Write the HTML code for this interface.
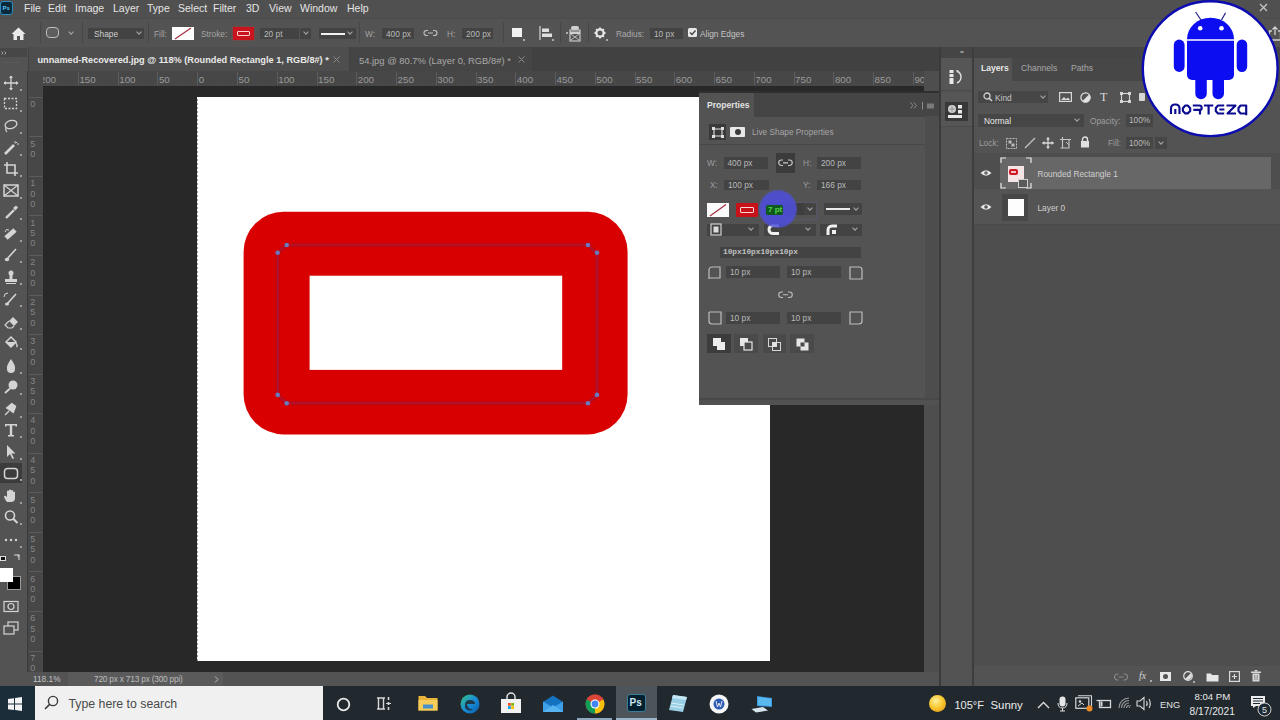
<!DOCTYPE html>
<html><head><meta charset="utf-8">
<style>
*{margin:0;padding:0;box-sizing:border-box}
html,body{width:1280px;height:720px;overflow:hidden;background:#535353;font-family:"Liberation Sans",sans-serif;color:#ddd}
.a{position:absolute}
.t{position:absolute;white-space:nowrap;line-height:1}
svg{position:absolute;overflow:visible}
#menu{left:0;top:0;width:1280px;height:18px;background:#505050}
#menu .t{top:2.7px;font-size:10.5px;color:#e4e4e4}
#opts{left:0;top:18px;width:1280px;height:29px;background:#535353;border-top:1px solid #4c4c4c}
#opts .t{font-size:8.3px;color:#a4a4a4;top:10.5px}
.fld{position:absolute;background:#434343;height:11px;top:10px}
.fld span{position:absolute;left:4px;top:1.5px;font-size:8.3px;color:#bababa;white-space:nowrap;line-height:1}
.sep{position:absolute;top:4px;width:1px;height:21px;background:#474747}
.chev{position:absolute;width:4px;height:4px;border-right:1px solid #aaa;border-bottom:1px solid #aaa;transform:rotate(45deg)}
#opts > :not(.t){margin-top:-1px}
#tools{left:0;top:47px;width:27px;height:625px;background:#535353}
#tabs{left:28px;top:47px;width:911px;height:24px;background:#414141}
.rl{font-size:9.8px;color:#9a9a9a}
.rv{font-size:9px;color:#858585}
#rulerh{left:28px;top:71px;width:896px;height:15px;background:#474747}
#rulerv{left:28px;top:86px;width:15px;height:586px;background:#474747}
#canvas{left:43px;top:86px;width:881px;height:586px;background:#282828}
#doc{left:197px;top:97px;width:573px;height:564px;background:#fff}
#vscroll{left:924px;top:71px;width:15px;height:601px;background:#4e4e4e}
#status{left:27px;top:672px;width:912px;height:14px;background:#535353}
#dock{left:941px;top:47px;width:32px;height:625px;background:#535353}
#layers{left:974px;top:47px;width:306px;height:625px;background:#535353}
#taskbar{left:0;top:686px;width:1280px;height:34px;background:#1f2a32}
</style></head><body>
<!-- MENU -->
<div id="menu" class="a">
  <div class="a" style="left:0px;top:1px;width:13px;height:14px;background:#0a2a3c;border:1px solid #2f8fbf;border-radius:3px"></div>
  <span class="t" style="left:2.5px;top:4.5px;font-size:6px;font-weight:bold;color:#5fc0f0">Ps</span>
  <span class="t" style="left:24px">File</span>
  <span class="t" style="left:48px">Edit</span>
  <span class="t" style="left:75px">Image</span>
  <span class="t" style="left:113px">Layer</span>
  <span class="t" style="left:147px">Type</span>
  <span class="t" style="left:178px">Select</span>
  <span class="t" style="left:213px">Filter</span>
  <span class="t" style="left:246px">3D</span>
  <span class="t" style="left:269px">View</span>
  <span class="t" style="left:300px">Window</span>
  <span class="t" style="left:347px">Help</span>
  <svg style="left:1259px;top:2.5px" width="9" height="9"><path d="M1 1L8 8M8 1L1 8" stroke="#c8c8c8" stroke-width="1.2"/></svg>
</div>
<!-- OPTIONS BAR -->
<div id="opts" class="a">
  <svg style="left:11px;top:9px" width="15" height="14"><path d="M7.5 0.5L0.5 7H2.5V13H6V9H9V13H12.5V7H14.5Z" fill="#eaeaea"/></svg>
  <div class="sep" style="left:40px"></div>
  <div class="a" style="left:46px;top:9px;width:13px;height:11px;border:1.5px solid #bdbdbd;border-radius:4px;background:#5e5e5e"></div>
  <div class="chev" style="left:69px;top:12px"></div>
  <div class="sep" style="left:82px"></div>
  <div class="fld" style="left:88px;width:56px"><span style="left:6px;color:#cfcfcf">Shape</span></div>
  <div class="chev" style="left:137px;top:12px"></div>
  <div class="sep" style="left:148px"></div>
  <span class="t" style="left:154px">Fill:</span>
  <div class="a" style="left:172px;top:8.5px;width:22px;height:13px;background:#fdfdfd"><svg style="left:0;top:0" width="22" height="13"><path d="M3 12L19 1" stroke="#a0303a" stroke-width="1.2"/></svg></div>
  <span class="t" style="left:201px">Stroke:</span>
  <div class="a" style="left:233px;top:8.5px;width:21px;height:13px;background:#c8141c;box-shadow:0 0 1px #e03030"><div class="a" style="left:4px;top:4px;width:13px;height:5px;border:1.2px solid #ffd0d0;border-radius:1px"></div></div>
  <div class="fld" style="left:260px;width:39px"><span>20 pt</span></div>
  <div class="fld" style="left:300px;width:11px"></div>
  <div class="chev" style="left:303.5px;top:12px"></div>
  <div class="fld" style="left:319px;width:37px"><div class="a" style="left:2px;top:4.5px;width:24px;height:2px;background:#f0f0f0"></div></div>
  <div class="chev" style="left:348px;top:12px"></div>
  <div class="sep" style="left:359px"></div>
  <span class="t" style="left:365px">W:</span>
  <div class="fld" style="left:382px;width:32px"><span>400 px</span></div>
  <svg style="left:423px;top:11px" width="15" height="8"><path d="M5 1.5H3.5A2.5 2.5 0 0 0 3.5 6.5H5M10 1.5H11.5A2.5 2.5 0 0 1 11.5 6.5H10M5 4H10" stroke="#c0c0c0" stroke-width="1.2" fill="none"/></svg>
  <span class="t" style="left:447px">H:</span>
  <div class="fld" style="left:462px;width:31px"><span>200 px</span></div>
  <div class="sep" style="left:503px"></div>
  <div class="a" style="left:512px;top:10px;width:10px;height:9px;background:#f2f2f2"></div>
  <div class="a" style="left:523px;top:21px;width:2px;height:2px;background:#aaa"></div>
  <svg style="left:539px;top:8px" width="15" height="15"><path d="M1 0V14" stroke="#ccc" stroke-width="1.3"/><rect x="3" y="2.5" width="7" height="3.5" fill="#e0e0e0"/><rect x="3" y="7.5" width="10" height="3.5" fill="#e0e0e0"/><rect x="13" y="13" width="2" height="2" fill="#aaa"/></svg>
  <div class="sep" style="left:560px"></div>
  <svg style="left:565px;top:7px" width="16" height="17"><circle cx="2" cy="8" r="1" fill="#ccc"/><rect x="6" y="1" width="8" height="4" rx="2" fill="#d0d0d0"/><rect x="5" y="5" width="10" height="11" fill="none" stroke="#c8c8c8" stroke-width="1.2"/><path d="M6 9L14 15M14 9L6 15" stroke="#bbb" stroke-width="1"/><rect x="5" y="6.5" width="10" height="2.5" fill="#d0d0d0"/></svg>
  <div class="sep" style="left:588px"></div>
  <svg style="left:594px;top:9px" width="14" height="14"><circle cx="6" cy="6" r="3.6" fill="none" stroke="#e6e6e6" stroke-width="2.2"/><path d="M6 0.5V2.5M6 9.5V11.5M0.5 6H2.5M9.5 6H11.5M2.1 2.1L3.5 3.5M8.5 8.5L9.9 9.9M2.1 9.9L3.5 8.5M8.5 3.5L9.9 2.1" stroke="#e6e6e6" stroke-width="1.8"/><rect x="12" y="12" width="2" height="2" fill="#aaa"/></svg>
  <span class="t" style="left:616px;color:#a9a9a9">Radius:</span>
  <div class="fld" style="left:650px;width:33px"><span>10 px</span></div>
  <div class="a" style="left:688px;top:10px;width:9px;height:9px;background:#e8e8e8;border-radius:1.5px"><svg style="left:0;top:0" width="9" height="9"><path d="M2 4.5L4 6.5L7.5 2.5" stroke="#444" stroke-width="1.4" fill="none"/></svg></div>
  <span class="t" style="left:700px;color:#c4c4c4">Align Edges</span>
  <svg style="left:1268px;top:8px" width="14" height="15"><path d="M4 5H1.5V14H12.5V5H10M7 1V9M4.5 3.5L7 1L9.5 3.5" stroke="#d0d0d0" stroke-width="1.3" fill="none"/></svg>
</div>
<!-- TOOLBAR -->
<div id="tools" class="a">
  <div class="a" style="left:0;top:1px;width:27px;height:9px;background:#474747"></div>
  <svg style="left:0.5px;top:4px" width="6" height="4"><path d="M0.5 0.5L2 2L0.5 3.5M3.5 0.5L5 2L3.5 3.5" stroke="#b0b0b0" stroke-width="0.9" fill="none"/></svg>
  <div class="a" style="left:3px;top:15px;width:17px;height:1px;background:#5a5a5a"></div>
  <div class="a" style="left:0px;top:415.5px;width:22px;height:20px;background:#3c3c3c"></div>
<svg style="left:3px;top:27.7px" width="16" height="16"><path d="M8 1V15M1 8H15" stroke="#d4d4d4" stroke-width="1.3"/><path d="M8 0.5L6 3H10ZM8 15.5L6 13H10ZM0.5 8L3 6V10ZM15.5 8L13 6V10Z" fill="#d4d4d4"/></svg>
<div class="a" style="left:20px;top:41.7px;width:2px;height:2px;background:#a0a0a0"></div>
<svg style="left:3px;top:49.0px" width="16" height="16"><rect x="1.5" y="2.5" width="12" height="10" fill="none" stroke="#d4d4d4" stroke-width="1.3" stroke-dasharray="2 1.5"/></svg>
<div class="a" style="left:20px;top:63.0px;width:2px;height:2px;background:#a0a0a0"></div>
<svg style="left:3px;top:71.0px" width="16" height="16"><ellipse cx="8" cy="6.5" rx="6" ry="4" fill="none" stroke="#d4d4d4" stroke-width="1.3" transform="rotate(-15 8 6.5)"/><path d="M3 9.5Q2 12 4 14" stroke="#d4d4d4" stroke-width="1.2" fill="none"/></svg>
<div class="a" style="left:20px;top:85.0px;width:2px;height:2px;background:#a0a0a0"></div>
<svg style="left:3px;top:92.7px" width="16" height="16"><path d="M2 14L11 5" stroke="#d4d4d4" stroke-width="2.6"/><path d="M12 1V3M14 4H16M12.5 3.5L14 2" stroke="#d4d4d4" stroke-width="1"/></svg>
<div class="a" style="left:20px;top:106.7px;width:2px;height:2px;background:#a0a0a0"></div>
<svg style="left:3px;top:114.0px" width="16" height="16"><path d="M4 1V12H15M1 4H12V15" stroke="#d4d4d4" stroke-width="1.6" fill="none"/></svg>
<div class="a" style="left:20px;top:128.0px;width:2px;height:2px;background:#a0a0a0"></div>
<svg style="left:3px;top:136.0px" width="16" height="16"><rect x="1" y="2" width="14" height="11" fill="none" stroke="#d4d4d4" stroke-width="1.5"/><path d="M1 2L15 13M15 2L1 13" stroke="#d4d4d4" stroke-width="1.2"/></svg>
<div class="a" style="left:20px;top:150.0px;width:2px;height:2px;background:#a0a0a0"></div>
<svg style="left:3px;top:157.0px" width="16" height="16"><path d="M3 14L11 6" stroke="#d4d4d4" stroke-width="2.4"/><path d="M10 4L13 1.5L15 3.5L12.5 6.5Z" fill="#d4d4d4"/></svg>
<div class="a" style="left:20px;top:171.0px;width:2px;height:2px;background:#a0a0a0"></div>
<svg style="left:3px;top:179.0px" width="16" height="16"><path d="M3 12L12 4" stroke="#d4d4d4" stroke-width="5"/><path d="M2 6Q3 2 6 4" stroke="#d4d4d4" stroke-width="1" fill="none"/></svg>
<div class="a" style="left:20px;top:193.0px;width:2px;height:2px;background:#a0a0a0"></div>
<svg style="left:3px;top:200.0px" width="16" height="16"><path d="M4 12L13 2" stroke="#d4d4d4" stroke-width="1.6"/><ellipse cx="4" cy="12.5" rx="2.2" ry="1.8" fill="#d4d4d4"/></svg>
<div class="a" style="left:20px;top:214.0px;width:2px;height:2px;background:#a0a0a0"></div>
<svg style="left:3px;top:222.0px" width="16" height="16"><circle cx="8" cy="4" r="2.5" fill="#d4d4d4"/><rect x="6.5" y="5" width="3" height="5" fill="#d4d4d4"/><rect x="2" y="10" width="12" height="3" fill="#d4d4d4"/><rect x="3" y="14" width="10" height="1" fill="#d4d4d4"/></svg>
<div class="a" style="left:20px;top:236.0px;width:2px;height:2px;background:#a0a0a0"></div>
<svg style="left:3px;top:244.0px" width="16" height="16"><path d="M4 13L13 3" stroke="#d4d4d4" stroke-width="1.6"/><ellipse cx="4" cy="13" rx="2" ry="1.6" fill="#d4d4d4"/><path d="M1 6Q1 2 5 2" stroke="#d4d4d4" stroke-width="1" fill="none"/></svg>
<div class="a" style="left:20px;top:258.0px;width:2px;height:2px;background:#a0a0a0"></div>
<svg style="left:3px;top:267.0px" width="16" height="16"><path d="M6 7L10 3L15 8L11 12Z" fill="#d4d4d4"/><path d="M6 7L2 11L5 14H9L11 12" fill="none" stroke="#d4d4d4" stroke-width="1.2"/></svg>
<div class="a" style="left:20px;top:281.0px;width:2px;height:2px;background:#a0a0a0"></div>
<svg style="left:3px;top:287.0px" width="16" height="16"><path d="M3 8L8 3L13 8L8 13Z" fill="none" stroke="#d4d4d4" stroke-width="1.5"/><path d="M13 9Q15 12 13.5 13" stroke="#d4d4d4" stroke-width="1.3" fill="none"/><path d="M3 8H13L8 13Z" fill="#d4d4d4"/></svg>
<div class="a" style="left:20px;top:301.0px;width:2px;height:2px;background:#a0a0a0"></div>
<svg style="left:3px;top:310.5px" width="16" height="16"><path d="M8 1Q13 8 12 11A4 4 0 0 1 4 11Q3 8 8 1Z" fill="#d4d4d4"/></svg>
<div class="a" style="left:20px;top:324.5px;width:2px;height:2px;background:#a0a0a0"></div>
<svg style="left:3px;top:332.0px" width="16" height="16"><circle cx="10" cy="6" r="4.5" fill="#d4d4d4"/><path d="M7 9.5L2 14" stroke="#d4d4d4" stroke-width="1.8"/></svg>
<div class="a" style="left:20px;top:346.0px;width:2px;height:2px;background:#a0a0a0"></div>
<svg style="left:3px;top:355.0px" width="16" height="16"><path d="M3 5L10 1L14 5L10 12Z" fill="#d4d4d4" transform="rotate(-10 8 8)"/><path d="M2 13L6 9" stroke="#d4d4d4" stroke-width="1.2"/></svg>
<div class="a" style="left:20px;top:369.0px;width:2px;height:2px;background:#a0a0a0"></div>
<svg style="left:3px;top:375.0px" width="16" height="16"><path d="M2 2H14V4.5H12.5V3.5H9.2V13H11V14.5H5V13H6.8V3.5H3.5V4.5H2Z" fill="#d4d4d4"/></svg>
<div class="a" style="left:20px;top:389.0px;width:2px;height:2px;background:#a0a0a0"></div>
<svg style="left:3px;top:396.7px" width="16" height="16"><path d="M4 1V13L7 10L9.5 15L11 14.3L8.5 9.5H12.5Z" fill="#d4d4d4"/></svg>
<div class="a" style="left:20px;top:410.7px;width:2px;height:2px;background:#a0a0a0"></div>
<svg style="left:3px;top:418.0px" width="16" height="16"><rect x="1.5" y="3.5" width="13" height="10" rx="3" fill="none" stroke="#d4d4d4" stroke-width="1.5"/></svg>
<div class="a" style="left:20px;top:432.0px;width:2px;height:2px;background:#a0a0a0"></div>
<svg style="left:3px;top:441.0px" width="16" height="16"><path d="M4 14Q1 10 1 8Q2 7 4 9V3Q5 2 6 3V7V2Q7 1 8 2V7V2.5Q9 1.5 10 2.5V7.5V4Q11 3 12 4V10Q12 14 8 14Z" fill="#d4d4d4"/></svg>
<div class="a" style="left:20px;top:455.0px;width:2px;height:2px;background:#a0a0a0"></div>
<svg style="left:3px;top:462.0px" width="16" height="16"><circle cx="7" cy="6.5" r="4.5" fill="none" stroke="#d4d4d4" stroke-width="1.6"/><path d="M10.2 9.7L14.5 14" stroke="#d4d4d4" stroke-width="2"/></svg>
<div class="a" style="left:20px;top:476.0px;width:2px;height:2px;background:#a0a0a0"></div>
<svg style="left:3px;top:485.0px" width="16" height="16"><circle cx="3" cy="8" r="1.2" fill="#d4d4d4"/><circle cx="8" cy="8" r="1.2" fill="#d4d4d4"/><circle cx="13" cy="8" r="1.2" fill="#d4d4d4"/></svg>
<div class="a" style="left:20px;top:499.0px;width:2px;height:2px;background:#a0a0a0"></div>
<div class="a" style="left:0px;top:509px;width:6px;height:5px;background:#111;border:1px solid #ddd"></div>
<svg style="left:13px;top:506px" width="8" height="8"><path d="M1 2H6V7" stroke="#d4d4d4" stroke-width="1.1" fill="none"/><path d="M4.5 1L6 2.5L4.5 4" stroke="#d4d4d4" stroke-width="1" fill="none"/></svg>
<div class="a" style="left:7px;top:528.5px;width:14px;height:14.5px;background:#000;border:1px solid #9a9a9a"></div>
<div class="a" style="left:0px;top:521px;width:13px;height:14px;background:#fff"></div>
<svg style="left:3px;top:553px" width="16" height="14"><rect x="1" y="1.5" width="14" height="10" fill="none" stroke="#d4d4d4" stroke-width="1.2"/><circle cx="8" cy="6.5" r="3" fill="none" stroke="#d4d4d4" stroke-width="1.2"/></svg>
<svg style="left:3px;top:574px" width="16" height="14"><rect x="5" y="1" width="10" height="8" fill="none" stroke="#d4d4d4" stroke-width="1.2"/><rect x="1" y="5" width="10" height="8" fill="#535353" stroke="#d4d4d4" stroke-width="1.2"/></svg>
</div>
<!-- TABS -->
<div id="tabs" class="a">
  <div class="a" style="left:1px;top:0;width:320px;height:24px;background:#4e4e4e"></div>
  <span class="t" style="left:9.5px;top:8.5px;font-size:9.2px;font-weight:bold;color:#e9e9e9">unnamed-Recovered.jpg @ 118% (Rounded Rectangle 1, RGB/8#) *</span>
  <svg style="left:305px;top:9px" width="7" height="7"><path d="M0.5 0.5L6.5 6.5M6.5 0.5L0.5 6.5" stroke="#8a8a8a" stroke-width="1"/></svg>
  <div class="a" style="left:322px;top:0;width:182px;height:24px;background:#454545"></div>
  <span class="t" style="left:331px;top:8.5px;font-size:9.4px;color:#a9a9a9">54.jpg @ 80.7% (Layer 0, RGB/8#) *</span>
  <svg style="left:490px;top:9px" width="7" height="7"><path d="M0.5 0.5L6.5 6.5M6.5 0.5L0.5 6.5" stroke="#8a8a8a" stroke-width="1"/></svg>
</div>
<!-- RULERS / CANVAS -->
<div id="rulerh" class="a"></div>
<div id="rulerv" class="a"></div>
<div class="a" style="left:27px;top:71px;width:1px;height:601px;background:#3a3a3a"></div>
<div id="canvas" class="a"></div>
<div class="a" style="left:43px;top:71px;width:881px;height:15px;overflow:hidden">
<div class="a" style="left:-4.8px;top:1px;width:1px;height:13px;background:#5c5c5c"></div>
<span class="t rl" style="left:-3.3px;top:3.5px">200</span>
<div class="a" style="left:-0.9px;top:12px;width:1px;height:2px;background:#4b4b4b"></div>
<div class="a" style="left:3.1px;top:12px;width:1px;height:2px;background:#4b4b4b"></div>
<div class="a" style="left:7.1px;top:12px;width:1px;height:2px;background:#4b4b4b"></div>
<div class="a" style="left:11.1px;top:12px;width:1px;height:2px;background:#4b4b4b"></div>
<div class="a" style="left:15.0px;top:10px;width:1px;height:4px;background:#4b4b4b"></div>
<div class="a" style="left:19.0px;top:12px;width:1px;height:2px;background:#4b4b4b"></div>
<div class="a" style="left:23.0px;top:12px;width:1px;height:2px;background:#4b4b4b"></div>
<div class="a" style="left:27.0px;top:12px;width:1px;height:2px;background:#4b4b4b"></div>
<div class="a" style="left:30.9px;top:12px;width:1px;height:2px;background:#4b4b4b"></div>
<div class="a" style="left:34.9px;top:1px;width:1px;height:13px;background:#5c5c5c"></div>
<span class="t rl" style="left:36.4px;top:3.5px">150</span>
<div class="a" style="left:38.9px;top:12px;width:1px;height:2px;background:#4b4b4b"></div>
<div class="a" style="left:42.9px;top:12px;width:1px;height:2px;background:#4b4b4b"></div>
<div class="a" style="left:46.8px;top:12px;width:1px;height:2px;background:#4b4b4b"></div>
<div class="a" style="left:50.8px;top:12px;width:1px;height:2px;background:#4b4b4b"></div>
<div class="a" style="left:54.8px;top:10px;width:1px;height:4px;background:#4b4b4b"></div>
<div class="a" style="left:58.8px;top:12px;width:1px;height:2px;background:#4b4b4b"></div>
<div class="a" style="left:62.8px;top:12px;width:1px;height:2px;background:#4b4b4b"></div>
<div class="a" style="left:66.7px;top:12px;width:1px;height:2px;background:#4b4b4b"></div>
<div class="a" style="left:70.7px;top:12px;width:1px;height:2px;background:#4b4b4b"></div>
<div class="a" style="left:74.7px;top:1px;width:1px;height:13px;background:#5c5c5c"></div>
<span class="t rl" style="left:76.2px;top:3.5px">100</span>
<div class="a" style="left:78.7px;top:12px;width:1px;height:2px;background:#4b4b4b"></div>
<div class="a" style="left:82.6px;top:12px;width:1px;height:2px;background:#4b4b4b"></div>
<div class="a" style="left:86.6px;top:12px;width:1px;height:2px;background:#4b4b4b"></div>
<div class="a" style="left:90.6px;top:12px;width:1px;height:2px;background:#4b4b4b"></div>
<div class="a" style="left:94.6px;top:10px;width:1px;height:4px;background:#4b4b4b"></div>
<div class="a" style="left:98.5px;top:12px;width:1px;height:2px;background:#4b4b4b"></div>
<div class="a" style="left:102.5px;top:12px;width:1px;height:2px;background:#4b4b4b"></div>
<div class="a" style="left:106.5px;top:12px;width:1px;height:2px;background:#4b4b4b"></div>
<div class="a" style="left:110.5px;top:12px;width:1px;height:2px;background:#4b4b4b"></div>
<div class="a" style="left:114.4px;top:1px;width:1px;height:13px;background:#5c5c5c"></div>
<span class="t rl" style="left:115.9px;top:3.5px">50</span>
<div class="a" style="left:118.4px;top:12px;width:1px;height:2px;background:#4b4b4b"></div>
<div class="a" style="left:122.4px;top:12px;width:1px;height:2px;background:#4b4b4b"></div>
<div class="a" style="left:126.4px;top:12px;width:1px;height:2px;background:#4b4b4b"></div>
<div class="a" style="left:130.3px;top:12px;width:1px;height:2px;background:#4b4b4b"></div>
<div class="a" style="left:134.3px;top:10px;width:1px;height:4px;background:#4b4b4b"></div>
<div class="a" style="left:138.3px;top:12px;width:1px;height:2px;background:#4b4b4b"></div>
<div class="a" style="left:142.3px;top:12px;width:1px;height:2px;background:#4b4b4b"></div>
<div class="a" style="left:146.2px;top:12px;width:1px;height:2px;background:#4b4b4b"></div>
<div class="a" style="left:150.2px;top:12px;width:1px;height:2px;background:#4b4b4b"></div>
<div class="a" style="left:154.2px;top:1px;width:1px;height:13px;background:#5c5c5c"></div>
<span class="t rl" style="left:155.7px;top:3.5px">0</span>
<div class="a" style="left:158.2px;top:12px;width:1px;height:2px;background:#4b4b4b"></div>
<div class="a" style="left:162.2px;top:12px;width:1px;height:2px;background:#4b4b4b"></div>
<div class="a" style="left:166.1px;top:12px;width:1px;height:2px;background:#4b4b4b"></div>
<div class="a" style="left:170.1px;top:12px;width:1px;height:2px;background:#4b4b4b"></div>
<div class="a" style="left:174.1px;top:10px;width:1px;height:4px;background:#4b4b4b"></div>
<div class="a" style="left:178.1px;top:12px;width:1px;height:2px;background:#4b4b4b"></div>
<div class="a" style="left:182.0px;top:12px;width:1px;height:2px;background:#4b4b4b"></div>
<div class="a" style="left:186.0px;top:12px;width:1px;height:2px;background:#4b4b4b"></div>
<div class="a" style="left:190.0px;top:12px;width:1px;height:2px;background:#4b4b4b"></div>
<div class="a" style="left:194.0px;top:1px;width:1px;height:13px;background:#5c5c5c"></div>
<span class="t rl" style="left:195.5px;top:3.5px">50</span>
<div class="a" style="left:197.9px;top:12px;width:1px;height:2px;background:#4b4b4b"></div>
<div class="a" style="left:201.9px;top:12px;width:1px;height:2px;background:#4b4b4b"></div>
<div class="a" style="left:205.9px;top:12px;width:1px;height:2px;background:#4b4b4b"></div>
<div class="a" style="left:209.9px;top:12px;width:1px;height:2px;background:#4b4b4b"></div>
<div class="a" style="left:213.8px;top:10px;width:1px;height:4px;background:#4b4b4b"></div>
<div class="a" style="left:217.8px;top:12px;width:1px;height:2px;background:#4b4b4b"></div>
<div class="a" style="left:221.8px;top:12px;width:1px;height:2px;background:#4b4b4b"></div>
<div class="a" style="left:225.8px;top:12px;width:1px;height:2px;background:#4b4b4b"></div>
<div class="a" style="left:229.7px;top:12px;width:1px;height:2px;background:#4b4b4b"></div>
<div class="a" style="left:233.7px;top:1px;width:1px;height:13px;background:#5c5c5c"></div>
<span class="t rl" style="left:235.2px;top:3.5px">100</span>
<div class="a" style="left:237.7px;top:12px;width:1px;height:2px;background:#4b4b4b"></div>
<div class="a" style="left:241.7px;top:12px;width:1px;height:2px;background:#4b4b4b"></div>
<div class="a" style="left:245.6px;top:12px;width:1px;height:2px;background:#4b4b4b"></div>
<div class="a" style="left:249.6px;top:12px;width:1px;height:2px;background:#4b4b4b"></div>
<div class="a" style="left:253.6px;top:10px;width:1px;height:4px;background:#4b4b4b"></div>
<div class="a" style="left:257.6px;top:12px;width:1px;height:2px;background:#4b4b4b"></div>
<div class="a" style="left:261.6px;top:12px;width:1px;height:2px;background:#4b4b4b"></div>
<div class="a" style="left:265.5px;top:12px;width:1px;height:2px;background:#4b4b4b"></div>
<div class="a" style="left:269.5px;top:12px;width:1px;height:2px;background:#4b4b4b"></div>
<div class="a" style="left:273.5px;top:1px;width:1px;height:13px;background:#5c5c5c"></div>
<span class="t rl" style="left:275.0px;top:3.5px">150</span>
<div class="a" style="left:277.5px;top:12px;width:1px;height:2px;background:#4b4b4b"></div>
<div class="a" style="left:281.4px;top:12px;width:1px;height:2px;background:#4b4b4b"></div>
<div class="a" style="left:285.4px;top:12px;width:1px;height:2px;background:#4b4b4b"></div>
<div class="a" style="left:289.4px;top:12px;width:1px;height:2px;background:#4b4b4b"></div>
<div class="a" style="left:293.4px;top:10px;width:1px;height:4px;background:#4b4b4b"></div>
<div class="a" style="left:297.3px;top:12px;width:1px;height:2px;background:#4b4b4b"></div>
<div class="a" style="left:301.3px;top:12px;width:1px;height:2px;background:#4b4b4b"></div>
<div class="a" style="left:305.3px;top:12px;width:1px;height:2px;background:#4b4b4b"></div>
<div class="a" style="left:309.3px;top:12px;width:1px;height:2px;background:#4b4b4b"></div>
<div class="a" style="left:313.2px;top:1px;width:1px;height:13px;background:#5c5c5c"></div>
<span class="t rl" style="left:314.7px;top:3.5px">200</span>
<div class="a" style="left:317.2px;top:12px;width:1px;height:2px;background:#4b4b4b"></div>
<div class="a" style="left:321.2px;top:12px;width:1px;height:2px;background:#4b4b4b"></div>
<div class="a" style="left:325.2px;top:12px;width:1px;height:2px;background:#4b4b4b"></div>
<div class="a" style="left:329.1px;top:12px;width:1px;height:2px;background:#4b4b4b"></div>
<div class="a" style="left:333.1px;top:10px;width:1px;height:4px;background:#4b4b4b"></div>
<div class="a" style="left:337.1px;top:12px;width:1px;height:2px;background:#4b4b4b"></div>
<div class="a" style="left:341.1px;top:12px;width:1px;height:2px;background:#4b4b4b"></div>
<div class="a" style="left:345.0px;top:12px;width:1px;height:2px;background:#4b4b4b"></div>
<div class="a" style="left:349.0px;top:12px;width:1px;height:2px;background:#4b4b4b"></div>
<div class="a" style="left:353.0px;top:1px;width:1px;height:13px;background:#5c5c5c"></div>
<span class="t rl" style="left:354.5px;top:3.5px">250</span>
<div class="a" style="left:357.0px;top:12px;width:1px;height:2px;background:#4b4b4b"></div>
<div class="a" style="left:361.0px;top:12px;width:1px;height:2px;background:#4b4b4b"></div>
<div class="a" style="left:364.9px;top:12px;width:1px;height:2px;background:#4b4b4b"></div>
<div class="a" style="left:368.9px;top:12px;width:1px;height:2px;background:#4b4b4b"></div>
<div class="a" style="left:372.9px;top:10px;width:1px;height:4px;background:#4b4b4b"></div>
<div class="a" style="left:376.9px;top:12px;width:1px;height:2px;background:#4b4b4b"></div>
<div class="a" style="left:380.8px;top:12px;width:1px;height:2px;background:#4b4b4b"></div>
<div class="a" style="left:384.8px;top:12px;width:1px;height:2px;background:#4b4b4b"></div>
<div class="a" style="left:388.8px;top:12px;width:1px;height:2px;background:#4b4b4b"></div>
<div class="a" style="left:392.8px;top:1px;width:1px;height:13px;background:#5c5c5c"></div>
<span class="t rl" style="left:394.3px;top:3.5px">300</span>
<div class="a" style="left:396.7px;top:12px;width:1px;height:2px;background:#4b4b4b"></div>
<div class="a" style="left:400.7px;top:12px;width:1px;height:2px;background:#4b4b4b"></div>
<div class="a" style="left:404.7px;top:12px;width:1px;height:2px;background:#4b4b4b"></div>
<div class="a" style="left:408.7px;top:12px;width:1px;height:2px;background:#4b4b4b"></div>
<div class="a" style="left:412.6px;top:10px;width:1px;height:4px;background:#4b4b4b"></div>
<div class="a" style="left:416.6px;top:12px;width:1px;height:2px;background:#4b4b4b"></div>
<div class="a" style="left:420.6px;top:12px;width:1px;height:2px;background:#4b4b4b"></div>
<div class="a" style="left:424.6px;top:12px;width:1px;height:2px;background:#4b4b4b"></div>
<div class="a" style="left:428.5px;top:12px;width:1px;height:2px;background:#4b4b4b"></div>
<div class="a" style="left:432.5px;top:1px;width:1px;height:13px;background:#5c5c5c"></div>
<span class="t rl" style="left:434.0px;top:3.5px">350</span>
<div class="a" style="left:436.5px;top:12px;width:1px;height:2px;background:#4b4b4b"></div>
<div class="a" style="left:440.5px;top:12px;width:1px;height:2px;background:#4b4b4b"></div>
<div class="a" style="left:444.4px;top:12px;width:1px;height:2px;background:#4b4b4b"></div>
<div class="a" style="left:448.4px;top:12px;width:1px;height:2px;background:#4b4b4b"></div>
<div class="a" style="left:452.4px;top:10px;width:1px;height:4px;background:#4b4b4b"></div>
<div class="a" style="left:456.4px;top:12px;width:1px;height:2px;background:#4b4b4b"></div>
<div class="a" style="left:460.4px;top:12px;width:1px;height:2px;background:#4b4b4b"></div>
<div class="a" style="left:464.3px;top:12px;width:1px;height:2px;background:#4b4b4b"></div>
<div class="a" style="left:468.3px;top:12px;width:1px;height:2px;background:#4b4b4b"></div>
<div class="a" style="left:472.3px;top:1px;width:1px;height:13px;background:#5c5c5c"></div>
<span class="t rl" style="left:473.8px;top:3.5px">400</span>
<div class="a" style="left:476.3px;top:12px;width:1px;height:2px;background:#4b4b4b"></div>
<div class="a" style="left:480.2px;top:12px;width:1px;height:2px;background:#4b4b4b"></div>
<div class="a" style="left:484.2px;top:12px;width:1px;height:2px;background:#4b4b4b"></div>
<div class="a" style="left:488.2px;top:12px;width:1px;height:2px;background:#4b4b4b"></div>
<div class="a" style="left:492.2px;top:10px;width:1px;height:4px;background:#4b4b4b"></div>
<div class="a" style="left:496.1px;top:12px;width:1px;height:2px;background:#4b4b4b"></div>
<div class="a" style="left:500.1px;top:12px;width:1px;height:2px;background:#4b4b4b"></div>
<div class="a" style="left:504.1px;top:12px;width:1px;height:2px;background:#4b4b4b"></div>
<div class="a" style="left:508.1px;top:12px;width:1px;height:2px;background:#4b4b4b"></div>
<div class="a" style="left:512.0px;top:1px;width:1px;height:13px;background:#5c5c5c"></div>
<span class="t rl" style="left:513.5px;top:3.5px">450</span>
<div class="a" style="left:516.0px;top:12px;width:1px;height:2px;background:#4b4b4b"></div>
<div class="a" style="left:520.0px;top:12px;width:1px;height:2px;background:#4b4b4b"></div>
<div class="a" style="left:524.0px;top:12px;width:1px;height:2px;background:#4b4b4b"></div>
<div class="a" style="left:527.9px;top:12px;width:1px;height:2px;background:#4b4b4b"></div>
<div class="a" style="left:531.9px;top:10px;width:1px;height:4px;background:#4b4b4b"></div>
<div class="a" style="left:535.9px;top:12px;width:1px;height:2px;background:#4b4b4b"></div>
<div class="a" style="left:539.9px;top:12px;width:1px;height:2px;background:#4b4b4b"></div>
<div class="a" style="left:543.8px;top:12px;width:1px;height:2px;background:#4b4b4b"></div>
<div class="a" style="left:547.8px;top:12px;width:1px;height:2px;background:#4b4b4b"></div>
<div class="a" style="left:551.8px;top:1px;width:1px;height:13px;background:#5c5c5c"></div>
<span class="t rl" style="left:553.3px;top:3.5px">500</span>
<div class="a" style="left:555.8px;top:12px;width:1px;height:2px;background:#4b4b4b"></div>
<div class="a" style="left:559.8px;top:12px;width:1px;height:2px;background:#4b4b4b"></div>
<div class="a" style="left:563.7px;top:12px;width:1px;height:2px;background:#4b4b4b"></div>
<div class="a" style="left:567.7px;top:12px;width:1px;height:2px;background:#4b4b4b"></div>
<div class="a" style="left:571.7px;top:10px;width:1px;height:4px;background:#4b4b4b"></div>
<div class="a" style="left:575.7px;top:12px;width:1px;height:2px;background:#4b4b4b"></div>
<div class="a" style="left:579.6px;top:12px;width:1px;height:2px;background:#4b4b4b"></div>
<div class="a" style="left:583.6px;top:12px;width:1px;height:2px;background:#4b4b4b"></div>
<div class="a" style="left:587.6px;top:12px;width:1px;height:2px;background:#4b4b4b"></div>
<div class="a" style="left:591.6px;top:1px;width:1px;height:13px;background:#5c5c5c"></div>
<span class="t rl" style="left:593.1px;top:3.5px">550</span>
<div class="a" style="left:595.5px;top:12px;width:1px;height:2px;background:#4b4b4b"></div>
<div class="a" style="left:599.5px;top:12px;width:1px;height:2px;background:#4b4b4b"></div>
<div class="a" style="left:603.5px;top:12px;width:1px;height:2px;background:#4b4b4b"></div>
<div class="a" style="left:607.5px;top:12px;width:1px;height:2px;background:#4b4b4b"></div>
<div class="a" style="left:611.4px;top:10px;width:1px;height:4px;background:#4b4b4b"></div>
<div class="a" style="left:615.4px;top:12px;width:1px;height:2px;background:#4b4b4b"></div>
<div class="a" style="left:619.4px;top:12px;width:1px;height:2px;background:#4b4b4b"></div>
<div class="a" style="left:623.4px;top:12px;width:1px;height:2px;background:#4b4b4b"></div>
<div class="a" style="left:627.3px;top:12px;width:1px;height:2px;background:#4b4b4b"></div>
<div class="a" style="left:631.3px;top:1px;width:1px;height:13px;background:#5c5c5c"></div>
<span class="t rl" style="left:632.8px;top:3.5px">600</span>
<div class="a" style="left:635.3px;top:12px;width:1px;height:2px;background:#4b4b4b"></div>
<div class="a" style="left:639.3px;top:12px;width:1px;height:2px;background:#4b4b4b"></div>
<div class="a" style="left:643.2px;top:12px;width:1px;height:2px;background:#4b4b4b"></div>
<div class="a" style="left:647.2px;top:12px;width:1px;height:2px;background:#4b4b4b"></div>
<div class="a" style="left:651.2px;top:10px;width:1px;height:4px;background:#4b4b4b"></div>
<div class="a" style="left:655.2px;top:12px;width:1px;height:2px;background:#4b4b4b"></div>
<div class="a" style="left:659.2px;top:12px;width:1px;height:2px;background:#4b4b4b"></div>
<div class="a" style="left:663.1px;top:12px;width:1px;height:2px;background:#4b4b4b"></div>
<div class="a" style="left:667.1px;top:12px;width:1px;height:2px;background:#4b4b4b"></div>
<div class="a" style="left:671.1px;top:1px;width:1px;height:13px;background:#5c5c5c"></div>
<span class="t rl" style="left:672.6px;top:3.5px">650</span>
<div class="a" style="left:675.1px;top:12px;width:1px;height:2px;background:#4b4b4b"></div>
<div class="a" style="left:679.0px;top:12px;width:1px;height:2px;background:#4b4b4b"></div>
<div class="a" style="left:683.0px;top:12px;width:1px;height:2px;background:#4b4b4b"></div>
<div class="a" style="left:687.0px;top:12px;width:1px;height:2px;background:#4b4b4b"></div>
<div class="a" style="left:691.0px;top:10px;width:1px;height:4px;background:#4b4b4b"></div>
<div class="a" style="left:694.9px;top:12px;width:1px;height:2px;background:#4b4b4b"></div>
<div class="a" style="left:698.9px;top:12px;width:1px;height:2px;background:#4b4b4b"></div>
<div class="a" style="left:702.9px;top:12px;width:1px;height:2px;background:#4b4b4b"></div>
<div class="a" style="left:706.9px;top:12px;width:1px;height:2px;background:#4b4b4b"></div>
<div class="a" style="left:710.8px;top:1px;width:1px;height:13px;background:#5c5c5c"></div>
<span class="t rl" style="left:712.3px;top:3.5px">700</span>
<div class="a" style="left:714.8px;top:12px;width:1px;height:2px;background:#4b4b4b"></div>
<div class="a" style="left:718.8px;top:12px;width:1px;height:2px;background:#4b4b4b"></div>
<div class="a" style="left:722.8px;top:12px;width:1px;height:2px;background:#4b4b4b"></div>
<div class="a" style="left:726.7px;top:12px;width:1px;height:2px;background:#4b4b4b"></div>
<div class="a" style="left:730.7px;top:10px;width:1px;height:4px;background:#4b4b4b"></div>
<div class="a" style="left:734.7px;top:12px;width:1px;height:2px;background:#4b4b4b"></div>
<div class="a" style="left:738.7px;top:12px;width:1px;height:2px;background:#4b4b4b"></div>
<div class="a" style="left:742.6px;top:12px;width:1px;height:2px;background:#4b4b4b"></div>
<div class="a" style="left:746.6px;top:12px;width:1px;height:2px;background:#4b4b4b"></div>
<div class="a" style="left:750.6px;top:1px;width:1px;height:13px;background:#5c5c5c"></div>
<span class="t rl" style="left:752.1px;top:3.5px">750</span>
<div class="a" style="left:754.6px;top:12px;width:1px;height:2px;background:#4b4b4b"></div>
<div class="a" style="left:758.6px;top:12px;width:1px;height:2px;background:#4b4b4b"></div>
<div class="a" style="left:762.5px;top:12px;width:1px;height:2px;background:#4b4b4b"></div>
<div class="a" style="left:766.5px;top:12px;width:1px;height:2px;background:#4b4b4b"></div>
<div class="a" style="left:770.5px;top:10px;width:1px;height:4px;background:#4b4b4b"></div>
<div class="a" style="left:774.5px;top:12px;width:1px;height:2px;background:#4b4b4b"></div>
<div class="a" style="left:778.4px;top:12px;width:1px;height:2px;background:#4b4b4b"></div>
<div class="a" style="left:782.4px;top:12px;width:1px;height:2px;background:#4b4b4b"></div>
<div class="a" style="left:786.4px;top:12px;width:1px;height:2px;background:#4b4b4b"></div>
<div class="a" style="left:790.4px;top:1px;width:1px;height:13px;background:#5c5c5c"></div>
<span class="t rl" style="left:791.9px;top:3.5px">800</span>
<div class="a" style="left:794.3px;top:12px;width:1px;height:2px;background:#4b4b4b"></div>
<div class="a" style="left:798.3px;top:12px;width:1px;height:2px;background:#4b4b4b"></div>
<div class="a" style="left:802.3px;top:12px;width:1px;height:2px;background:#4b4b4b"></div>
<div class="a" style="left:806.3px;top:12px;width:1px;height:2px;background:#4b4b4b"></div>
<div class="a" style="left:810.2px;top:10px;width:1px;height:4px;background:#4b4b4b"></div>
<div class="a" style="left:814.2px;top:12px;width:1px;height:2px;background:#4b4b4b"></div>
<div class="a" style="left:818.2px;top:12px;width:1px;height:2px;background:#4b4b4b"></div>
<div class="a" style="left:822.2px;top:12px;width:1px;height:2px;background:#4b4b4b"></div>
<div class="a" style="left:826.1px;top:12px;width:1px;height:2px;background:#4b4b4b"></div>
<div class="a" style="left:830.1px;top:1px;width:1px;height:13px;background:#5c5c5c"></div>
<span class="t rl" style="left:831.6px;top:3.5px">850</span>
<div class="a" style="left:834.1px;top:12px;width:1px;height:2px;background:#4b4b4b"></div>
<div class="a" style="left:838.1px;top:12px;width:1px;height:2px;background:#4b4b4b"></div>
<div class="a" style="left:842.0px;top:12px;width:1px;height:2px;background:#4b4b4b"></div>
<div class="a" style="left:846.0px;top:12px;width:1px;height:2px;background:#4b4b4b"></div>
<div class="a" style="left:850.0px;top:10px;width:1px;height:4px;background:#4b4b4b"></div>
<div class="a" style="left:854.0px;top:12px;width:1px;height:2px;background:#4b4b4b"></div>
<div class="a" style="left:858.0px;top:12px;width:1px;height:2px;background:#4b4b4b"></div>
<div class="a" style="left:861.9px;top:12px;width:1px;height:2px;background:#4b4b4b"></div>
<div class="a" style="left:865.9px;top:12px;width:1px;height:2px;background:#4b4b4b"></div>
<div class="a" style="left:869.9px;top:1px;width:1px;height:13px;background:#5c5c5c"></div>
<span class="t rl" style="left:871.4px;top:3.5px">900</span>
<div class="a" style="left:873.9px;top:12px;width:1px;height:2px;background:#4b4b4b"></div>
<div class="a" style="left:877.8px;top:12px;width:1px;height:2px;background:#4b4b4b"></div>
<div class="a" style="left:881.8px;top:12px;width:1px;height:2px;background:#4b4b4b"></div>
<div class="a" style="left:885.8px;top:12px;width:1px;height:2px;background:#4b4b4b"></div>
<div class="a" style="left:889.8px;top:10px;width:1px;height:4px;background:#4b4b4b"></div>
<div class="a" style="left:893.7px;top:12px;width:1px;height:2px;background:#4b4b4b"></div>
<div class="a" style="left:897.7px;top:12px;width:1px;height:2px;background:#4b4b4b"></div>
<div class="a" style="left:901.7px;top:12px;width:1px;height:2px;background:#4b4b4b"></div>
<div class="a" style="left:905.7px;top:12px;width:1px;height:2px;background:#4b4b4b"></div>
</div>
<div class="a" style="left:28px;top:86px;width:15px;height:586px;overflow:hidden">
<div class="a" style="left:1px;top:10.8px;width:13px;height:1px;background:#5c5c5c"></div>
<span class="t rv" style="left:2.2px;top:14.0px">0</span>
<div class="a" style="left:12px;top:14.8px;width:2px;height:1px;background:#4b4b4b"></div>
<div class="a" style="left:12px;top:18.7px;width:2px;height:1px;background:#4b4b4b"></div>
<div class="a" style="left:12px;top:22.7px;width:2px;height:1px;background:#4b4b4b"></div>
<div class="a" style="left:12px;top:26.6px;width:2px;height:1px;background:#4b4b4b"></div>
<div class="a" style="left:10px;top:30.6px;width:4px;height:1px;background:#4b4b4b"></div>
<div class="a" style="left:12px;top:34.5px;width:2px;height:1px;background:#4b4b4b"></div>
<div class="a" style="left:12px;top:38.5px;width:2px;height:1px;background:#4b4b4b"></div>
<div class="a" style="left:12px;top:42.4px;width:2px;height:1px;background:#4b4b4b"></div>
<div class="a" style="left:12px;top:46.4px;width:2px;height:1px;background:#4b4b4b"></div>
<div class="a" style="left:1px;top:50.3px;width:13px;height:1px;background:#5c5c5c"></div>
<span class="t rv" style="left:2.2px;top:53.5px">5</span>
<span class="t rv" style="left:2.2px;top:63.9px">0</span>
<div class="a" style="left:12px;top:54.3px;width:2px;height:1px;background:#4b4b4b"></div>
<div class="a" style="left:12px;top:58.3px;width:2px;height:1px;background:#4b4b4b"></div>
<div class="a" style="left:12px;top:62.2px;width:2px;height:1px;background:#4b4b4b"></div>
<div class="a" style="left:12px;top:66.2px;width:2px;height:1px;background:#4b4b4b"></div>
<div class="a" style="left:10px;top:70.1px;width:4px;height:1px;background:#4b4b4b"></div>
<div class="a" style="left:12px;top:74.1px;width:2px;height:1px;background:#4b4b4b"></div>
<div class="a" style="left:12px;top:78.0px;width:2px;height:1px;background:#4b4b4b"></div>
<div class="a" style="left:12px;top:82.0px;width:2px;height:1px;background:#4b4b4b"></div>
<div class="a" style="left:12px;top:85.9px;width:2px;height:1px;background:#4b4b4b"></div>
<div class="a" style="left:1px;top:89.9px;width:13px;height:1px;background:#5c5c5c"></div>
<span class="t rv" style="left:2.2px;top:93.1px">1</span>
<span class="t rv" style="left:2.2px;top:103.5px">0</span>
<span class="t rv" style="left:2.2px;top:113.9px">0</span>
<div class="a" style="left:12px;top:93.9px;width:2px;height:1px;background:#4b4b4b"></div>
<div class="a" style="left:12px;top:97.8px;width:2px;height:1px;background:#4b4b4b"></div>
<div class="a" style="left:12px;top:101.8px;width:2px;height:1px;background:#4b4b4b"></div>
<div class="a" style="left:12px;top:105.7px;width:2px;height:1px;background:#4b4b4b"></div>
<div class="a" style="left:10px;top:109.7px;width:4px;height:1px;background:#4b4b4b"></div>
<div class="a" style="left:12px;top:113.6px;width:2px;height:1px;background:#4b4b4b"></div>
<div class="a" style="left:12px;top:117.6px;width:2px;height:1px;background:#4b4b4b"></div>
<div class="a" style="left:12px;top:121.5px;width:2px;height:1px;background:#4b4b4b"></div>
<div class="a" style="left:12px;top:125.5px;width:2px;height:1px;background:#4b4b4b"></div>
<div class="a" style="left:1px;top:129.4px;width:13px;height:1px;background:#5c5c5c"></div>
<span class="t rv" style="left:2.2px;top:132.6px">1</span>
<span class="t rv" style="left:2.2px;top:143.0px">5</span>
<span class="t rv" style="left:2.2px;top:153.4px">0</span>
<div class="a" style="left:12px;top:133.4px;width:2px;height:1px;background:#4b4b4b"></div>
<div class="a" style="left:12px;top:137.4px;width:2px;height:1px;background:#4b4b4b"></div>
<div class="a" style="left:12px;top:141.3px;width:2px;height:1px;background:#4b4b4b"></div>
<div class="a" style="left:12px;top:145.3px;width:2px;height:1px;background:#4b4b4b"></div>
<div class="a" style="left:10px;top:149.2px;width:4px;height:1px;background:#4b4b4b"></div>
<div class="a" style="left:12px;top:153.2px;width:2px;height:1px;background:#4b4b4b"></div>
<div class="a" style="left:12px;top:157.1px;width:2px;height:1px;background:#4b4b4b"></div>
<div class="a" style="left:12px;top:161.1px;width:2px;height:1px;background:#4b4b4b"></div>
<div class="a" style="left:12px;top:165.0px;width:2px;height:1px;background:#4b4b4b"></div>
<div class="a" style="left:1px;top:169.0px;width:13px;height:1px;background:#5c5c5c"></div>
<span class="t rv" style="left:2.2px;top:172.2px">2</span>
<span class="t rv" style="left:2.2px;top:182.6px">0</span>
<span class="t rv" style="left:2.2px;top:193.0px">0</span>
<div class="a" style="left:12px;top:173.0px;width:2px;height:1px;background:#4b4b4b"></div>
<div class="a" style="left:12px;top:176.9px;width:2px;height:1px;background:#4b4b4b"></div>
<div class="a" style="left:12px;top:180.9px;width:2px;height:1px;background:#4b4b4b"></div>
<div class="a" style="left:12px;top:184.8px;width:2px;height:1px;background:#4b4b4b"></div>
<div class="a" style="left:10px;top:188.8px;width:4px;height:1px;background:#4b4b4b"></div>
<div class="a" style="left:12px;top:192.7px;width:2px;height:1px;background:#4b4b4b"></div>
<div class="a" style="left:12px;top:196.7px;width:2px;height:1px;background:#4b4b4b"></div>
<div class="a" style="left:12px;top:200.6px;width:2px;height:1px;background:#4b4b4b"></div>
<div class="a" style="left:12px;top:204.6px;width:2px;height:1px;background:#4b4b4b"></div>
<div class="a" style="left:1px;top:208.6px;width:13px;height:1px;background:#5c5c5c"></div>
<span class="t rv" style="left:2.2px;top:211.8px">2</span>
<span class="t rv" style="left:2.2px;top:222.2px">5</span>
<span class="t rv" style="left:2.2px;top:232.6px">0</span>
<div class="a" style="left:12px;top:212.5px;width:2px;height:1px;background:#4b4b4b"></div>
<div class="a" style="left:12px;top:216.5px;width:2px;height:1px;background:#4b4b4b"></div>
<div class="a" style="left:12px;top:220.4px;width:2px;height:1px;background:#4b4b4b"></div>
<div class="a" style="left:12px;top:224.4px;width:2px;height:1px;background:#4b4b4b"></div>
<div class="a" style="left:10px;top:228.3px;width:4px;height:1px;background:#4b4b4b"></div>
<div class="a" style="left:12px;top:232.3px;width:2px;height:1px;background:#4b4b4b"></div>
<div class="a" style="left:12px;top:236.2px;width:2px;height:1px;background:#4b4b4b"></div>
<div class="a" style="left:12px;top:240.2px;width:2px;height:1px;background:#4b4b4b"></div>
<div class="a" style="left:12px;top:244.1px;width:2px;height:1px;background:#4b4b4b"></div>
<div class="a" style="left:1px;top:248.1px;width:13px;height:1px;background:#5c5c5c"></div>
<span class="t rv" style="left:2.2px;top:251.3px">3</span>
<span class="t rv" style="left:2.2px;top:261.7px">0</span>
<span class="t rv" style="left:2.2px;top:272.1px">0</span>
<div class="a" style="left:12px;top:252.1px;width:2px;height:1px;background:#4b4b4b"></div>
<div class="a" style="left:12px;top:256.0px;width:2px;height:1px;background:#4b4b4b"></div>
<div class="a" style="left:12px;top:260.0px;width:2px;height:1px;background:#4b4b4b"></div>
<div class="a" style="left:12px;top:263.9px;width:2px;height:1px;background:#4b4b4b"></div>
<div class="a" style="left:10px;top:267.9px;width:4px;height:1px;background:#4b4b4b"></div>
<div class="a" style="left:12px;top:271.8px;width:2px;height:1px;background:#4b4b4b"></div>
<div class="a" style="left:12px;top:275.8px;width:2px;height:1px;background:#4b4b4b"></div>
<div class="a" style="left:12px;top:279.7px;width:2px;height:1px;background:#4b4b4b"></div>
<div class="a" style="left:12px;top:283.7px;width:2px;height:1px;background:#4b4b4b"></div>
<div class="a" style="left:1px;top:287.6px;width:13px;height:1px;background:#5c5c5c"></div>
<span class="t rv" style="left:2.2px;top:290.8px">3</span>
<span class="t rv" style="left:2.2px;top:301.2px">5</span>
<span class="t rv" style="left:2.2px;top:311.6px">0</span>
<div class="a" style="left:12px;top:291.6px;width:2px;height:1px;background:#4b4b4b"></div>
<div class="a" style="left:12px;top:295.6px;width:2px;height:1px;background:#4b4b4b"></div>
<div class="a" style="left:12px;top:299.5px;width:2px;height:1px;background:#4b4b4b"></div>
<div class="a" style="left:12px;top:303.5px;width:2px;height:1px;background:#4b4b4b"></div>
<div class="a" style="left:10px;top:307.4px;width:4px;height:1px;background:#4b4b4b"></div>
<div class="a" style="left:12px;top:311.4px;width:2px;height:1px;background:#4b4b4b"></div>
<div class="a" style="left:12px;top:315.3px;width:2px;height:1px;background:#4b4b4b"></div>
<div class="a" style="left:12px;top:319.3px;width:2px;height:1px;background:#4b4b4b"></div>
<div class="a" style="left:12px;top:323.2px;width:2px;height:1px;background:#4b4b4b"></div>
<div class="a" style="left:1px;top:327.2px;width:13px;height:1px;background:#5c5c5c"></div>
<span class="t rv" style="left:2.2px;top:330.4px">4</span>
<span class="t rv" style="left:2.2px;top:340.8px">0</span>
<span class="t rv" style="left:2.2px;top:351.2px">0</span>
<div class="a" style="left:12px;top:331.2px;width:2px;height:1px;background:#4b4b4b"></div>
<div class="a" style="left:12px;top:335.1px;width:2px;height:1px;background:#4b4b4b"></div>
<div class="a" style="left:12px;top:339.1px;width:2px;height:1px;background:#4b4b4b"></div>
<div class="a" style="left:12px;top:343.0px;width:2px;height:1px;background:#4b4b4b"></div>
<div class="a" style="left:10px;top:347.0px;width:4px;height:1px;background:#4b4b4b"></div>
<div class="a" style="left:12px;top:350.9px;width:2px;height:1px;background:#4b4b4b"></div>
<div class="a" style="left:12px;top:354.9px;width:2px;height:1px;background:#4b4b4b"></div>
<div class="a" style="left:12px;top:358.8px;width:2px;height:1px;background:#4b4b4b"></div>
<div class="a" style="left:12px;top:362.8px;width:2px;height:1px;background:#4b4b4b"></div>
<div class="a" style="left:1px;top:366.8px;width:13px;height:1px;background:#5c5c5c"></div>
<span class="t rv" style="left:2.2px;top:369.9px">4</span>
<span class="t rv" style="left:2.2px;top:380.3px">5</span>
<span class="t rv" style="left:2.2px;top:390.8px">0</span>
<div class="a" style="left:12px;top:370.7px;width:2px;height:1px;background:#4b4b4b"></div>
<div class="a" style="left:12px;top:374.7px;width:2px;height:1px;background:#4b4b4b"></div>
<div class="a" style="left:12px;top:378.6px;width:2px;height:1px;background:#4b4b4b"></div>
<div class="a" style="left:12px;top:382.6px;width:2px;height:1px;background:#4b4b4b"></div>
<div class="a" style="left:10px;top:386.5px;width:4px;height:1px;background:#4b4b4b"></div>
<div class="a" style="left:12px;top:390.5px;width:2px;height:1px;background:#4b4b4b"></div>
<div class="a" style="left:12px;top:394.4px;width:2px;height:1px;background:#4b4b4b"></div>
<div class="a" style="left:12px;top:398.4px;width:2px;height:1px;background:#4b4b4b"></div>
<div class="a" style="left:12px;top:402.3px;width:2px;height:1px;background:#4b4b4b"></div>
<div class="a" style="left:1px;top:406.3px;width:13px;height:1px;background:#5c5c5c"></div>
<span class="t rv" style="left:2.2px;top:409.5px">5</span>
<span class="t rv" style="left:2.2px;top:419.9px">0</span>
<span class="t rv" style="left:2.2px;top:430.3px">0</span>
<div class="a" style="left:12px;top:410.3px;width:2px;height:1px;background:#4b4b4b"></div>
<div class="a" style="left:12px;top:414.2px;width:2px;height:1px;background:#4b4b4b"></div>
<div class="a" style="left:12px;top:418.2px;width:2px;height:1px;background:#4b4b4b"></div>
<div class="a" style="left:12px;top:422.1px;width:2px;height:1px;background:#4b4b4b"></div>
<div class="a" style="left:10px;top:426.1px;width:4px;height:1px;background:#4b4b4b"></div>
<div class="a" style="left:12px;top:430.0px;width:2px;height:1px;background:#4b4b4b"></div>
<div class="a" style="left:12px;top:434.0px;width:2px;height:1px;background:#4b4b4b"></div>
<div class="a" style="left:12px;top:437.9px;width:2px;height:1px;background:#4b4b4b"></div>
<div class="a" style="left:12px;top:441.9px;width:2px;height:1px;background:#4b4b4b"></div>
<div class="a" style="left:1px;top:445.8px;width:13px;height:1px;background:#5c5c5c"></div>
<span class="t rv" style="left:2.2px;top:449.0px">5</span>
<span class="t rv" style="left:2.2px;top:459.4px">5</span>
<span class="t rv" style="left:2.2px;top:469.8px">0</span>
<div class="a" style="left:12px;top:449.8px;width:2px;height:1px;background:#4b4b4b"></div>
<div class="a" style="left:12px;top:453.8px;width:2px;height:1px;background:#4b4b4b"></div>
<div class="a" style="left:12px;top:457.7px;width:2px;height:1px;background:#4b4b4b"></div>
<div class="a" style="left:12px;top:461.7px;width:2px;height:1px;background:#4b4b4b"></div>
<div class="a" style="left:10px;top:465.6px;width:4px;height:1px;background:#4b4b4b"></div>
<div class="a" style="left:12px;top:469.6px;width:2px;height:1px;background:#4b4b4b"></div>
<div class="a" style="left:12px;top:473.5px;width:2px;height:1px;background:#4b4b4b"></div>
<div class="a" style="left:12px;top:477.5px;width:2px;height:1px;background:#4b4b4b"></div>
<div class="a" style="left:12px;top:481.4px;width:2px;height:1px;background:#4b4b4b"></div>
<div class="a" style="left:1px;top:485.4px;width:13px;height:1px;background:#5c5c5c"></div>
<span class="t rv" style="left:2.2px;top:488.6px">6</span>
<span class="t rv" style="left:2.2px;top:499.0px">0</span>
<span class="t rv" style="left:2.2px;top:509.4px">0</span>
<div class="a" style="left:12px;top:489.4px;width:2px;height:1px;background:#4b4b4b"></div>
<div class="a" style="left:12px;top:493.3px;width:2px;height:1px;background:#4b4b4b"></div>
<div class="a" style="left:12px;top:497.3px;width:2px;height:1px;background:#4b4b4b"></div>
<div class="a" style="left:12px;top:501.2px;width:2px;height:1px;background:#4b4b4b"></div>
<div class="a" style="left:10px;top:505.2px;width:4px;height:1px;background:#4b4b4b"></div>
<div class="a" style="left:12px;top:509.1px;width:2px;height:1px;background:#4b4b4b"></div>
<div class="a" style="left:12px;top:513.1px;width:2px;height:1px;background:#4b4b4b"></div>
<div class="a" style="left:12px;top:517.0px;width:2px;height:1px;background:#4b4b4b"></div>
<div class="a" style="left:12px;top:521.0px;width:2px;height:1px;background:#4b4b4b"></div>
<div class="a" style="left:1px;top:524.9px;width:13px;height:1px;background:#5c5c5c"></div>
<span class="t rv" style="left:2.2px;top:528.1px">6</span>
<span class="t rv" style="left:2.2px;top:538.5px">5</span>
<span class="t rv" style="left:2.2px;top:548.9px">0</span>
<div class="a" style="left:12px;top:528.9px;width:2px;height:1px;background:#4b4b4b"></div>
<div class="a" style="left:12px;top:532.9px;width:2px;height:1px;background:#4b4b4b"></div>
<div class="a" style="left:12px;top:536.8px;width:2px;height:1px;background:#4b4b4b"></div>
<div class="a" style="left:12px;top:540.8px;width:2px;height:1px;background:#4b4b4b"></div>
<div class="a" style="left:10px;top:544.7px;width:4px;height:1px;background:#4b4b4b"></div>
<div class="a" style="left:12px;top:548.7px;width:2px;height:1px;background:#4b4b4b"></div>
<div class="a" style="left:12px;top:552.6px;width:2px;height:1px;background:#4b4b4b"></div>
<div class="a" style="left:12px;top:556.6px;width:2px;height:1px;background:#4b4b4b"></div>
<div class="a" style="left:12px;top:560.5px;width:2px;height:1px;background:#4b4b4b"></div>
<div class="a" style="left:1px;top:564.5px;width:13px;height:1px;background:#5c5c5c"></div>
<span class="t rv" style="left:2.2px;top:567.7px">7</span>
<span class="t rv" style="left:2.2px;top:578.1px">0</span>
<span class="t rv" style="left:2.2px;top:588.5px">0</span>
<div class="a" style="left:12px;top:568.5px;width:2px;height:1px;background:#4b4b4b"></div>
<div class="a" style="left:12px;top:572.4px;width:2px;height:1px;background:#4b4b4b"></div>
<div class="a" style="left:12px;top:576.4px;width:2px;height:1px;background:#4b4b4b"></div>
<div class="a" style="left:12px;top:580.3px;width:2px;height:1px;background:#4b4b4b"></div>
<div class="a" style="left:10px;top:584.3px;width:4px;height:1px;background:#4b4b4b"></div>
<div class="a" style="left:12px;top:588.2px;width:2px;height:1px;background:#4b4b4b"></div>
<div class="a" style="left:12px;top:592.2px;width:2px;height:1px;background:#4b4b4b"></div>
<div class="a" style="left:12px;top:596.1px;width:2px;height:1px;background:#4b4b4b"></div>
<div class="a" style="left:12px;top:600.1px;width:2px;height:1px;background:#4b4b4b"></div>
</div>
<div id="vscroll" class="a"></div>
<div class="a" style="left:939px;top:47px;width:2px;height:639px;background:#3b3b3b"></div>
<div id="doc" class="a"></div>
<div class="a" style="left:197px;top:97px;width:1px;height:564px;background:repeating-linear-gradient(#fff 0 2px,#9a9a9a 2px 4px)"></div>
<!-- SHAPE -->
<svg style="left:0;top:0" width="1280" height="720">
  <rect x="243.6" y="211.8" width="384" height="222.6" rx="40" fill="#d80000"/>
  <rect x="309.6" y="275.7" width="252.6" height="94.2" fill="#fff"/>
  <path d="M286.7 245H588L597 254V394.9L588 403.2H286.7L277.7 394.9V252.8Z" fill="none" stroke="#8a1030" stroke-opacity="0.22" stroke-width="5"/>
  <path d="M286.7 245H588L597 254V394.9L588 403.2H286.7L277.7 394.9V252.8Z" fill="none" stroke="#7a3a8a" stroke-opacity="0.45" stroke-width="1.2"/>
  <g fill="#6a78c0">
    <circle cx="286.7" cy="245" r="2.3"/><circle cx="277.7" cy="252.8" r="2.3"/>
    <circle cx="588" cy="245" r="2.3"/><circle cx="597" cy="252.8" r="2.3"/>
    <circle cx="597" cy="394.9" r="2.3"/><circle cx="588" cy="403.2" r="2.3"/>
    <circle cx="286.7" cy="403.2" r="2.3"/><circle cx="277.7" cy="394.9" r="2.3"/>
  </g>
</svg>
<!-- PROPERTIES PANEL -->
<div class="a" style="left:699px;top:91px;width:240px;height:314px;background:#535353;border-top:1px solid #2e2e2e">
  <div class="a" style="left:0;top:0;width:240px;height:1px;background:#303030"></div>
  <div class="a" style="left:0;top:1px;width:240px;height:24px;background:#454545"></div>
  <div class="a" style="left:0;top:1px;width:55px;height:24px;background:#535353"></div>
  <span class="t" style="left:8px;top:9px;font-size:8.6px;font-weight:bold;color:#e2e2e2">Properties</span>
  <svg style="left:211px;top:10px" width="30" height="8"><path d="M0.5 0.5L3 3.5L0.5 6.5M4 0.5L6.5 3.5L4 6.5" stroke="#8c8c8c" stroke-width="1" fill="none"/><path d="M12.5 0V7.5" stroke="#8c8c8c" stroke-width="1"/><rect x="17" y="1.5" width="7" height="5" fill="#7a7a7a"/></svg>
  <div class="a" style="left:226px;top:24px;width:14px;height:284px;background:#4d4d4d"></div>
  <div class="a" style="left:0;top:306px;width:240px;height:2px;background:#484848"></div>
  <div class="a" style="left:0;top:308px;width:240px;height:5px;background:#515151"></div>
  <!-- live shape row -->
  <div class="a" style="left:10px;top:32px;width:17px;height:16px;background:#3a3a3a"></div>
  <svg style="left:13px;top:35px" width="12" height="11"><path d="M2 1V10M10 1V10M1 2H11M1 9H11" stroke="#e0e0e0" stroke-width="1.1" stroke-dasharray="1.5 0"/><rect x="0" y="0" width="3" height="3" fill="#e0e0e0"/><rect x="9" y="0" width="3" height="3" fill="#e0e0e0"/><rect x="0" y="8" width="3" height="3" fill="#e0e0e0"/><rect x="9" y="8" width="3" height="3" fill="#e0e0e0"/></svg>
  <div class="a" style="left:31px;top:35px;width:15px;height:10px;background:#e8e8e8;border-radius:1px"><div class="a" style="left:4.5px;top:2px;width:6px;height:6px;border-radius:50%;background:#3a3a3a"></div></div>
  <span class="t" style="left:53px;top:36px;font-size:8.3px;color:#a6a6a6">Live Shape Properties</span>
  <div class="a" style="left:0;top:52px;width:226px;height:1px;background:#474747"></div>
  <!-- W/H -->
  <span class="t" style="left:8px;top:67px;font-size:8.3px;color:#9c9c9c">W:</span>
  <div class="fld" style="left:24.5px;top:65px;width:44px;height:11.5px"><span style="top:2px">400 px</span></div>
  <div class="a" style="left:77px;top:61px;width:19px;height:20px;background:#3b3b3b"></div>
  <svg style="left:79px;top:67px" width="15" height="8"><path d="M5 1H3.5A2.7 2.7 0 0 0 3.5 6.5H5M10 1H11.5A2.7 2.7 0 0 1 11.5 6.5H10M5 3.8H10" stroke="#c8c8c8" stroke-width="1.2" fill="none"/></svg>
  <span class="t" style="left:104px;top:67px;font-size:8.3px;color:#9c9c9c">H:</span>
  <div class="fld" style="left:118px;top:65px;width:44px;height:11.5px"><span style="top:2px">200 px</span></div>
  <!-- X/Y -->
  <span class="t" style="left:11px;top:89px;font-size:8.3px;color:#9c9c9c">X:</span>
  <div class="fld" style="left:25px;top:87.5px;width:45px;height:10.5px"><span style="top:1.5px">100 px</span></div>
  <span class="t" style="left:104px;top:89px;font-size:8.3px;color:#9c9c9c">Y:</span>
  <div class="fld" style="left:118px;top:87.5px;width:44px;height:10.5px"><span style="top:1.5px">166 px</span></div>
  <!-- fill/stroke -->
  <div class="a" style="left:8px;top:111px;width:21.5px;height:13.5px;background:#fbfbfb"><svg style="left:0;top:0" width="22" height="14"><path d="M3 13L19 1.5" stroke="#a23040" stroke-width="1.2"/></svg></div>
  <div class="a" style="left:37px;top:111px;width:22px;height:13.5px;background:#c8121a;border-radius:1px"><div class="a" style="left:4px;top:4px;width:14px;height:5.5px;border:1.2px solid #ffd6d6;border-radius:1px"></div></div>
  <div class="fld" style="left:65px;top:111px;width:40px;height:12px;background:#3e3e3e"><span style="color:#9ccf6a">7 pt</span></div>
  <div class="fld" style="left:105px;top:111px;width:12px;height:12px;background:#434343"></div>
  <div class="chev" style="left:108.5px;top:114px"></div>
  <div class="fld" style="left:125px;top:111px;width:38px;height:12px"><div class="a" style="left:2px;top:5px;width:24px;height:2px;background:#eaeaea"></div></div>
  <div class="chev" style="left:154.5px;top:114px"></div>
  <!-- align row -->
  <div class="fld" style="left:8px;top:131.5px;width:52px;height:12px"></div>
  <svg style="left:11px;top:131px" width="12" height="13"><rect x="1" y="1" width="10" height="11" fill="none" stroke="#dcdcdc" stroke-width="1.1"/><rect x="3.5" y="3.5" width="5" height="6" fill="#dcdcdc"/></svg>
  <div class="chev" style="left:50px;top:134px"></div>
  <div class="fld" style="left:65px;top:131.5px;width:52px;height:12px"></div>
  <svg style="left:69px;top:132px" width="12" height="11"><path d="M11 1.5H5A3.5 3.5 0 0 0 5 9.5H11" stroke="#f0f0f0" stroke-width="3" fill="none"/></svg>
  <div class="chev" style="left:107px;top:134px"></div>
  <div class="fld" style="left:121px;top:131.5px;width:42px;height:12px"></div>
  <svg style="left:127px;top:132px" width="12" height="12"><path d="M2 11V6A4 4 0 0 1 6 2H11" stroke="#f0f0f0" stroke-width="3" fill="none"/><rect x="6" y="6" width="4" height="4" fill="#f0f0f0"/></svg>
  <div class="chev" style="left:154px;top:134px"></div>
  <!-- radii -->
  <div class="fld" style="left:21px;top:155px;width:141px;height:11px"><span style="left:3px;top:2px;font-family:'Liberation Mono',monospace;font-size:7.8px;font-weight:bold;color:#c0c0c0">10px10px10px10px</span></div>
  <svg style="left:9px;top:174px" width="14" height="14"><path d="M1 13V4A3 3 0 0 1 4 1H12V12H1" stroke="#bdbdbd" stroke-width="1.2" fill="none"/></svg>
  <div class="fld" style="left:27px;top:174px;width:54px;height:12px"><span style="top:2px">10 px</span></div>
  <div class="fld" style="left:88px;top:174px;width:54px;height:12px"><span style="top:2px">10 px</span></div>
  <svg style="left:150px;top:174px" width="14" height="14"><path d="M1 1H10A3 3 0 0 1 13 4V13H1Z" stroke="#bdbdbd" stroke-width="1.2" fill="none"/></svg>
  <svg style="left:79px;top:199px" width="15" height="8"><path d="M5 1H3.5A2.7 2.7 0 0 0 3.5 6.5H5M10 1H11.5A2.7 2.7 0 0 1 11.5 6.5H10M5 3.8H10" stroke="#c0c0c0" stroke-width="1.1" fill="none"/></svg>
  <svg style="left:9px;top:219px" width="14" height="14"><path d="M1 1V10A3 3 0 0 0 4 13H13V1H1" stroke="#bdbdbd" stroke-width="1.2" fill="none"/></svg>
  <div class="fld" style="left:27px;top:220px;width:54px;height:12px"><span style="top:2px">10 px</span></div>
  <div class="fld" style="left:88px;top:220px;width:54px;height:12px"><span style="top:2px">10 px</span></div>
  <svg style="left:150px;top:219px" width="14" height="14"><path d="M1 1H13V10A3 3 0 0 1 10 13H1Z" stroke="#bdbdbd" stroke-width="1.2" fill="none"/></svg>
  <!-- path ops -->
  <div class="a" style="left:8px;top:242px;width:24px;height:19px;background:#3c3c3c"></div>
  <svg style="left:14px;top:245.5px" width="14" height="13"><rect x="0" y="0" width="8" height="8" fill="#ececec"/><rect x="4" y="4" width="8" height="8" fill="#ececec"/></svg>
  <div class="a" style="left:35px;top:242px;width:24px;height:19px;background:#4a4a4a"></div>
  <svg style="left:41px;top:245.5px" width="14" height="13"><rect x="0" y="0" width="8" height="8" fill="#e6e6e6"/><rect x="4" y="4" width="8" height="8" fill="#4a4a4a" stroke="#e6e6e6" stroke-width="1.2"/></svg>
  <div class="a" style="left:64px;top:242px;width:23px;height:19px;background:#4a4a4a"></div>
  <svg style="left:69px;top:245.5px" width="14" height="13"><rect x="0.5" y="0.5" width="8" height="8" fill="none" stroke="#d6d6d6" stroke-width="1"/><rect x="4.5" y="4.5" width="8" height="8" fill="none" stroke="#d6d6d6" stroke-width="1"/><rect x="4.5" y="4.5" width="4" height="4" fill="#e6e6e6"/></svg>
  <div class="a" style="left:91px;top:242px;width:24px;height:19px;background:#4a4a4a"></div>
  <svg style="left:97px;top:245.5px" width="14" height="13"><rect x="0.5" y="0.5" width="8" height="8" fill="#e6e6e6"/><rect x="4.5" y="4.5" width="8" height="8" fill="#e6e6e6"/><rect x="4.5" y="4.5" width="4" height="4" fill="#4a4a4a"/></svg>
  <!-- blue highlight circle -->
  <div class="a" style="left:64px;top:110px;width:54px;height:18px;border:1px solid rgba(90,100,190,0.22)"></div>
  <div class="a" style="left:59.5px;top:97.5px;width:38px;height:38px;border-radius:50%;background:radial-gradient(circle, rgba(75,75,220,0.92) 0%, rgba(78,78,215,0.9) 60%, rgba(85,85,200,0.5) 82%, rgba(85,85,200,0) 100%)"></div>
  <div class="a" style="left:67px;top:112.5px;width:17px;height:10.5px;background:#0e5a1a;border-radius:2px"></div>
  <span class="t" style="left:69px;top:114px;font-size:8px;color:#58d050;font-weight:bold">7 pt</span>
</div>
<!-- DOCK -->
<div class="a" style="left:941px;top:47px;width:33px;height:639px;background:#535353">
  <div class="a" style="left:0;top:0;width:32px;height:11px;background:#454545"></div>
  <span class="t" style="left:19px;top:1px;font-size:7px;color:#9a9a9a;letter-spacing:-1px">&#x2022;&#x2022;</span>
  <div class="a" style="left:0;top:11px;width:31px;height:33px;background:#565656;border-bottom:1px solid #4a4a4a"></div>
  <svg style="left:8px;top:22px" width="14" height="16"><rect x="0.5" y="1" width="4" height="3" fill="#e8e8e8"/><rect x="0.5" y="5" width="4" height="3" fill="#e8e8e8"/><rect x="0.5" y="9" width="4" height="6" fill="#e8e8e8"/><path d="M8 2Q12 4 12 8Q12 12 8 14" stroke="#e0e0e0" stroke-width="1.4" fill="none"/><path d="M7 1L9.5 1.5L8.5 4Z" fill="#e0e0e0"/></svg>
  <div class="a" style="left:0;top:46px;width:31px;height:34px;background:#565656;border-bottom:1px solid #4a4a4a"></div>
  <div class="a" style="left:3.5px;top:55px;width:23px;height:18.5px;background:#383838"></div>
  <svg style="left:6px;top:57px" width="17" height="14"><circle cx="5" cy="5" r="4" fill="#cfcfcf"/><path d="M2 5H8M5 2V8" stroke="#888" stroke-width="0.8"/><rect x="11" y="1" width="4" height="3.5" fill="#e8e8e8"/><rect x="11" y="6" width="4" height="3.5" fill="#e8e8e8"/><rect x="1" y="11" width="14" height="3" fill="#e8e8e8"/></svg>
  <div class="a" style="left:31px;top:0;width:2px;height:639px;background:#3d3d3d"></div>
</div>
<!-- LAYERS PANEL -->
<div class="a" style="left:974px;top:47px;width:306px;height:625px;background:#535353">
  <div class="a" style="left:0;top:0;width:306px;height:11px;background:#454545"></div>
  <div class="a" style="left:0;top:11px;width:306px;height:23px;background:#474747"></div>
  <div class="a" style="left:0;top:11px;width:38px;height:23px;background:#535353"></div>
  <span class="t" style="left:7px;top:17px;font-size:8.6px;font-weight:bold;color:#e6e6e6">Layers</span>
  <span class="t" style="left:47px;top:17px;font-size:8.6px;color:#a8a8a8">Channels</span>
  <span class="t" style="left:97px;top:17px;font-size:8.6px;color:#a8a8a8">Paths</span>
  <!-- kind row -->
  <div class="fld" style="left:4px;top:43.5px;width:70px;height:12.5px;background:#464646"></div>
  <svg style="left:9px;top:45px" width="10" height="10"><circle cx="4" cy="4" r="3" fill="none" stroke="#d0d0d0" stroke-width="1.3"/><path d="M6.2 6.2L9 9" stroke="#d0d0d0" stroke-width="1.6"/></svg>
  <span class="t" style="left:21px;top:46.5px;font-size:8.3px;color:#c6c6c6">Kind</span>
  <div class="chev" style="left:67px;top:47px"></div>
  <svg style="left:85px;top:45px" width="13" height="10"><rect x="0.6" y="0.6" width="11.8" height="8.8" fill="none" stroke="#d8d8d8" stroke-width="1.2"/><path d="M2 8L5 5L7 7L9 5.5L11 8Z" fill="#d8d8d8"/></svg>
  <svg style="left:106px;top:44.5px" width="11" height="11"><circle cx="5.5" cy="5.5" r="4.6" fill="none" stroke="#e0e0e0" stroke-width="1.2"/><path d="M9 2.5L2.5 9A4.6 4.6 0 0 0 9 2.5Z" fill="#e0e0e0"/></svg>
  <span class="t" style="left:126px;top:44px;font-size:12px;font-family:'Liberation Serif',serif;color:#dcdcdc">T</span>
  <svg style="left:146px;top:44.5px" width="11" height="11"><rect x="1.5" y="1.5" width="8" height="8" fill="none" stroke="#d6d6d6" stroke-width="1.1"/><rect x="0" y="0" width="3" height="3" fill="#d6d6d6"/><rect x="8" y="0" width="3" height="3" fill="#d6d6d6"/><rect x="0" y="8" width="3" height="3" fill="#d6d6d6"/><rect x="8" y="8" width="3" height="3" fill="#d6d6d6"/></svg>
  <div class="a" style="left:165px;top:46px;width:6px;height:8px;background:#d6d6d6;border-radius:1px"></div>
  <!-- normal row -->
  <div class="fld" style="left:4px;top:66.5px;width:105.5px;height:13px;background:#464646"></div>
  <span class="t" style="left:10px;top:70px;font-size:8.4px;color:#e6e6e6">Normal</span>
  <div class="chev" style="left:101px;top:70px"></div>
  <span class="t" style="left:116px;top:70px;font-size:8.3px;color:#9e9e9e">Opacity:</span>
  <div class="fld" style="left:152px;top:66.5px;width:27px;height:13px;background:#464646"><span style="top:2.5px;left:3px">100%</span></div>
  <!-- lock row -->
  <span class="t" style="left:5px;top:92px;font-size:8.3px;color:#9e9e9e">Lock:</span>
  <svg style="left:32px;top:90.5px" width="11" height="11"><rect x="0.5" y="0.5" width="10" height="10" fill="none" stroke="#bdbdbd" stroke-width="1" stroke-dasharray="2 1"/><rect x="2.5" y="2.5" width="3" height="3" fill="#bdbdbd"/><rect x="5.5" y="5.5" width="3" height="3" fill="#bdbdbd"/></svg>
  <svg style="left:50px;top:90px" width="12" height="12"><path d="M1 11L11 1" stroke="#bdbdbd" stroke-width="1.5"/></svg>
  <svg style="left:68px;top:89.5px" width="12" height="12"><path d="M6 0.5V11.5M0.5 6H11.5" stroke="#d6d6d6" stroke-width="1.3"/><path d="M6 0L4 2.5H8ZM6 12L4 9.5H8ZM0 6L2.5 4V8ZM12 6L9.5 4V8Z" fill="#d6d6d6"/></svg>
  <svg style="left:86px;top:90px" width="12" height="12"><path d="M2.5 0V11M0 2.5H11M9 2.5V11H0.5" stroke="#c8c8c8" stroke-width="1.1" fill="none"/><path d="M6 5L9 8" stroke="#c8c8c8" stroke-width="1"/></svg>
  <svg style="left:106px;top:89px" width="10" height="12"><path d="M2.5 5V3.5A2.5 2.5 0 0 1 7.5 3.5V5" stroke="#e0e0e0" stroke-width="1.4" fill="none"/><rect x="1" y="5" width="8" height="6.5" fill="#e0e0e0"/></svg>
  <span class="t" style="left:134px;top:92px;font-size:8.3px;color:#9e9e9e">Fill:</span>
  <div class="fld" style="left:152px;top:89.5px;width:27px;height:12.5px;background:#464646"><span style="top:2.5px;left:3px">100%</span></div>
  <div class="a" style="left:181px;top:89.5px;width:12px;height:12.5px;background:#464646"></div>
  <div class="chev" style="left:185px;top:93px"></div>
  <!-- layers list -->
  <div class="a" style="left:0;top:106px;width:306px;height:513px;background:#4e4e4e"></div>
  <div class="a" style="left:26px;top:109.5px;width:271px;height:32.5px;background:#676767"></div>
  <svg style="left:6px;top:122px" width="12" height="8"><path d="M0.5 4Q6 -1.5 11.5 4Q6 9.5 0.5 4Z" fill="#e8e8e8"/><circle cx="6" cy="4" r="1.8" fill="#676767"/></svg>
  <svg style="left:26px;top:110px" width="32" height="32"><path d="M1 6V1H6M26 1H31V6M31 26V31H26M6 31H1V26" stroke="#e8e8e8" stroke-width="1.2" fill="none"/></svg>
  <div class="a" style="left:33.5px;top:118.5px;width:16px;height:16px;background:#f4e4e6"></div>
  <div class="a" style="left:35px;top:122px;width:9px;height:6px;background:#d01824;border-radius:2px"><div class="a" style="left:2px;top:2px;width:5px;height:1.5px;background:#f4c0c0"></div></div>
  <div class="a" style="left:44px;top:132px;width:10px;height:9px;background:#5a5a5a;border:1px solid #cfcfcf"></div>
  <span class="t" style="left:63.5px;top:122.5px;font-size:8.3px;color:#d0d0d0">Rounded Rectangle 1</span>
  <div class="a" style="left:0;top:142px;width:306px;height:35px;background:#545454"></div>
  <div class="a" style="left:0;top:176.5px;width:306px;height:1px;background:#4a4a4a"></div>
  <svg style="left:6px;top:156px" width="12" height="8"><path d="M0.5 4Q6 -1.5 11.5 4Q6 9.5 0.5 4Z" fill="#e8e8e8"/><circle cx="6" cy="4" r="1.8" fill="#545454"/></svg>
  <div class="a" style="left:28px;top:146.5px;width:26px;height:27px;background:#474747"></div>
  <div class="a" style="left:34px;top:152px;width:15.5px;height:17px;background:#fdfdfd"></div>
  <span class="t" style="left:63.5px;top:156.5px;font-size:8.3px;color:#cfcfcf">Layer 0</span>
  <!-- bottom bar -->
  <div class="a" style="left:0;top:619px;width:306px;height:6px;background:#535353"></div>
  <svg style="left:140px;top:626px" width="14" height="8"><path d="M4.5 1H3.5A3 3 0 0 0 3.5 7H4.5M9.5 1H10.5A3 3 0 0 1 10.5 7H9.5M4.5 4H9.5" stroke="#8a8a8a" stroke-width="1.1" fill="none"/></svg>
  <span class="t" style="left:165px;top:624px;font-size:10px;font-style:italic;font-family:'Liberation Serif',serif;color:#d6d6d6">fx</span>
  <div class="a" style="left:176px;top:633px;width:2px;height:2px;background:#aaa"></div>
  <div class="a" style="left:186px;top:624.5px;width:11px;height:9px;background:#e8e8e8"><div class="a" style="left:3px;top:2px;width:5px;height:5px;border-radius:50%;background:#535353"></div></div>
  <svg style="left:209px;top:624px" width="12" height="12"><circle cx="5" cy="5" r="4.3" fill="none" stroke="#e0e0e0" stroke-width="1.2"/><path d="M8 2L2 8A4.3 4.3 0 0 0 8 2Z" fill="#e0e0e0"/><rect x="10" y="10" width="2" height="2" fill="#aaa"/></svg>
  <svg style="left:232px;top:624.5px" width="13" height="10"><path d="M0.5 1.5H5L6 3H12.5V9.5H0.5Z" fill="#e6e6e6"/></svg>
  <svg style="left:255px;top:623.5px" width="11" height="11"><rect x="0.6" y="0.6" width="9.8" height="9.8" fill="none" stroke="#d8d8d8" stroke-width="1.2"/><path d="M5.5 3V8M3 5.5H8" stroke="#d8d8d8" stroke-width="1.2"/></svg>
  <svg style="left:277px;top:623px" width="10" height="12"><rect x="0" y="1.5" width="10" height="1.5" fill="#d8d8d8"/><rect x="3.5" y="0" width="3" height="1.5" fill="#d8d8d8"/><path d="M1.5 3.5H8.5V11.5H1.5Z" fill="#d8d8d8"/><path d="M3.5 5V10M5 5V10M6.5 5V10" stroke="#777" stroke-width="0.6"/></svg>
</div>
<!-- STATUS BAR -->
<div class="a" style="left:27px;top:672px;width:912px;height:14px;background:#535353">
  <span class="t" style="left:6px;top:3px;font-size:8.3px;color:#c4c4c4">118.1%</span>
  <div class="a" style="left:41px;top:0;width:155px;height:14px;background:#5a5a5a"></div>
  <span class="t" style="left:67px;top:3px;font-size:8.3px;color:#bdbdbd;letter-spacing:-0.2px">720 px x 713 px (300 ppi)</span>
  <svg style="left:187px;top:4px" width="5" height="7"><path d="M1 0.5L4 3.5L1 6.5" stroke="#bbb" stroke-width="1" fill="none"/></svg>
</div>
<!-- TASKBAR -->
<div class="a" style="left:0;top:686px;width:1280px;height:34px;background:#21292f">
  <div class="a" style="left:0;top:0;width:35px;height:34px;background:#1b2d39"></div>
  <svg style="left:8px;top:10.5px" width="15" height="15"><path d="M0 2L6 1.2V6.6H0Z M7 1V6.6H14V0Z M0 7.6H6V13L0 12.2Z M7 7.6H14V14L7 13Z" fill="#f4f4f4"/></svg>
  <div class="a" style="left:35px;top:0;width:288px;height:34px;background:#f0f0f0"></div>
  <svg style="left:44px;top:9px" width="16" height="16"><circle cx="9" cy="6" r="4.6" fill="none" stroke="#3a3a3a" stroke-width="1.4"/><path d="M5.6 9.4L1 14" stroke="#3a3a3a" stroke-width="1.6"/></svg>
  <span class="t" style="left:68.5px;top:12px;font-size:12.3px;color:#4a4a4a">Type here to search</span>
  <svg style="left:336px;top:11px" width="15" height="15"><circle cx="7.5" cy="7.5" r="5.8" fill="none" stroke="#eaeaea" stroke-width="1.8"/></svg>
  <svg style="left:376px;top:10px" width="17" height="15"><path d="M1 2H9M1 13H9M2.5 2V13M7.5 2V13" stroke="#d8d8d8" stroke-width="1.4" fill="none"/><path d="M12.5 1V4M12.5 6V9M12.5 11V14" stroke="#d8d8d8" stroke-width="1.6"/><path d="M10 7.5H15" stroke="#d8d8d8" stroke-width="1"/></svg>
  <!-- explorer -->
  <svg style="left:418px;top:9px" width="20" height="17"><path d="M0.5 1H7L9 3H19.5V15.5H0.5Z" fill="#e8b53a"/><rect x="0.5" y="5" width="19" height="10.5" fill="#f6cd5a"/><rect x="5" y="9.5" width="10" height="4" fill="#4a90c8"/></svg>
  <!-- edge -->
  <svg style="left:459px;top:8px" width="22" height="20"><defs><linearGradient id="eg" x1="0" y1="0" x2="1" y2="1"><stop offset="0" stop-color="#36c07a"/><stop offset="0.5" stop-color="#1a8fd8"/><stop offset="1" stop-color="#0a5aa8"/></linearGradient></defs><circle cx="11" cy="10" r="9.5" fill="url(#eg)"/><path d="M6 11Q6 6 11 6Q16 6 16 10H8Q8.5 15 14 15.5Q9 18 6 14Z" fill="#1e2a33" opacity="0.85"/></svg>
  <!-- store -->
  <svg style="left:500px;top:7px" width="22" height="21"><path d="M7 6V4A4 4 0 0 1 15 4V6" stroke="#e8e8e8" stroke-width="1.4" fill="none"/><rect x="1" y="6" width="20" height="14" fill="#f2f2f2"/><rect x="8" y="10" width="2.8" height="2.8" fill="#f25022"/><rect x="11.2" y="10" width="2.8" height="2.8" fill="#7fba00"/><rect x="8" y="13.2" width="2.8" height="2.8" fill="#00a4ef"/><rect x="11.2" y="13.2" width="2.8" height="2.8" fill="#ffb900"/></svg>
  <!-- mail -->
  <svg style="left:542px;top:9px" width="22" height="18"><path d="M1 7L11 0.5L21 7V17H1Z" fill="#1572c0"/><path d="M1 6.5L11 12.5L21 6.5V17H1Z" fill="#3ea0e8"/><path d="M1 17L11 10L21 17" fill="#58b4f0"/></svg>
  <!-- chrome -->
  <svg style="left:584.5px;top:8px" width="20" height="20"><circle cx="10" cy="10" r="9.5" fill="#db4437"/><path d="M10 10L1.8 5.3A9.5 9.5 0 0 0 10 19.5Z" fill="#0f9d58"/><path d="M10 10L10 19.5A9.5 9.5 0 0 0 18.2 5.3Z" fill="#f4c20d"/><path d="M10 0.5A9.5 9.5 0 0 0 1.8 5.3L10 10L18.2 5.3A9.5 9.5 0 0 0 10 0.5Z" fill="#db4437"/><circle cx="10" cy="10" r="4.5" fill="#fff"/><circle cx="10" cy="10" r="3.4" fill="#4285f4"/></svg>
  <div class="a" style="left:577px;top:32px;width:35px;height:2px;background:#8fa8bd"></div>
  <!-- PS active -->
  <div class="a" style="left:616px;top:0;width:41px;height:34px;background:#4d555b"></div>
  <div class="a" style="left:616px;top:32px;width:41px;height:2px;background:#9ab4c8"></div>
  <div class="a" style="left:626.5px;top:8px;width:19.5px;height:18px;background:#03202e;border:1.5px solid #3a7f9a;border-radius:3px"></div>
  <span class="t" style="left:629.5px;top:12px;font-size:10px;font-weight:bold;color:#cfe6f4">Ps</span>
  <!-- notepad-ish -->
  <svg style="left:668px;top:8px" width="20" height="19"><path d="M5 1L19 3L15 18L1 16Z" fill="#9ad0e6"/><path d="M5 1L19 3L18 6L4 4Z" fill="#c6e8f4"/><path d="M3 9L16 11M2.5 12L15 14" stroke="#e8f6fa" stroke-width="0.8"/></svg>
  <!-- circle app -->
  <svg style="left:709px;top:8px" width="20" height="20"><circle cx="10" cy="10" r="9.5" fill="#f6f6f6"/><circle cx="10" cy="10" r="5.5" fill="#2a5cb8"/><path d="M7 7L8.5 13L10 9L11.5 13L13 7" stroke="#e8e8e8" stroke-width="1" fill="none"/></svg>
  <!-- computer -->
  <svg style="left:751px;top:9px" width="22" height="18"><path d="M6 1L21 3V12L6 11Z" fill="#3a9ae0"/><path d="M7 2L20 3.8V11L7 10Z" fill="#5ab8f0"/><path d="M0.5 14L12 12L17 15.5L5 17.5Z" fill="#d8e4ec"/></svg>
  <!-- weather -->
  <div class="a" style="left:929px;top:9px;width:17px;height:17px;border-radius:50%;background:radial-gradient(circle at 40% 35%, #fff0a0 0%, #f8c830 45%, #e89010 100%)"></div>
  <span class="t" style="left:954.5px;top:13.5px;font-size:11px;color:#ececec">105°F</span>
  <span class="t" style="left:990.5px;top:13.5px;font-size:11.4px;color:#ececec">Sunny</span>
  <svg style="left:1037px;top:14.5px" width="13" height="8"><path d="M1 7L6.5 1.5L12 7" stroke="#e0e0e0" stroke-width="1.3" fill="none"/></svg>
  <svg style="left:1057px;top:10px" width="11" height="16"><rect x="2.5" y="0.5" width="6" height="10" rx="3" fill="#e6e6e6"/><path d="M1 7Q1 12 5.5 12Q10 12 10 7M5.5 12V15M3 15H8" stroke="#e0e0e0" stroke-width="1" fill="none"/></svg>
  <svg style="left:1075px;top:9px" width="19" height="17"><rect x="0.8" y="2.8" width="13" height="10.5" fill="none" stroke="#d6d6d6" stroke-width="1.2"/><path d="M3 0.8H16.5V11" stroke="#d6d6d6" stroke-width="1.1" fill="none"/><circle cx="5" cy="6.5" r="1.3" fill="#d6d6d6"/><path d="M3 11L7 8L9 10" stroke="#d6d6d6" stroke-width="1" fill="none"/><circle cx="14.5" cy="13.5" r="3" fill="#f08a20"/></svg>
  <svg style="left:1096px;top:13px" width="16" height="10"><rect x="3.5" y="1.5" width="11" height="7" fill="none" stroke="#d8d8d8" stroke-width="1.3"/><path d="M0.5 1.5H3.5" stroke="#d8d8d8" stroke-width="1.3"/><rect x="4.5" y="2.5" width="2" height="5" fill="#d8d8d8"/></svg>
  <svg style="left:1118px;top:11px" width="14" height="12"><path d="M1 11A10 10 0 0 1 11 1M3.5 11A7.5 7.5 0 0 1 11 3.5M6 11A5 5 0 0 1 11 6M8.5 11A2.5 2.5 0 0 1 11 8.5" stroke="#9a9a9a" stroke-width="1.1" fill="none"/><path d="M11 11L12.5 8" stroke="#aaa" stroke-width="0.8"/></svg>
  <svg style="left:1136px;top:10px" width="17" height="15"><path d="M1 5H4L8 1.5V13.5L4 10H1Z" fill="none" stroke="#d8d8d8" stroke-width="1.1"/><path d="M10.5 5Q12 7.5 10.5 10M13 3Q15.5 7.5 13 12" stroke="#d8d8d8" stroke-width="1.1" fill="none"/></svg>
  <span class="t" style="left:1160px;top:14.5px;font-size:9.3px;color:#e2e2e2">ENG</span>
  <span class="t" style="left:1194.5px;top:5.5px;font-size:9.6px;color:#e8e8e8">8:04 PM</span>
  <span class="t" style="left:1189.5px;top:20.5px;font-size:10.2px;color:#e8e8e8">8/17/2021</span>
  <svg style="left:1250px;top:9px" width="22" height="23"><path d="M1 1H15V11H6L3 13V11H1Z" fill="#ececec"/><path d="M3 3.5H13M3 6H13M3 8.5H10" stroke="#1e2a33" stroke-width="1"/><circle cx="14.5" cy="14.5" r="6.5" fill="#1e2a33" stroke="#cfcfcf" stroke-width="1"/><text x="14.5" y="17.8" font-size="9" fill="#e8e8e8" text-anchor="middle" font-family="Liberation Sans">5</text></svg>
</div>
<!-- LOGO -->
<svg style="left:0;top:0" width="1280" height="720">
  <circle cx="1210.2" cy="68.7" r="67.4" fill="#ffffff" stroke="#0c0cb0" stroke-width="2.4"/>
  <g fill="#0d0df2">
    <path d="M1187 39.2A23.5 21.5 0 0 1 1234 39.2Z"/>
    <path d="M1187 40.8H1234V75A5 5 0 0 1 1229 80H1192A5 5 0 0 1 1187 75Z"/>
    <rect x="1173.8" y="39.6" width="10.8" height="32.3" rx="5.4"/>
    <rect x="1236.7" y="39.6" width="10.5" height="32.3" rx="5.2"/>
    <rect x="1195.3" y="74" width="11.5" height="25.2" rx="5.7"/>
    <rect x="1212.5" y="74" width="11.5" height="25.2" rx="5.7"/>
  </g>
  <path d="M1195.6 12L1201 20M1225.6 12.8L1221.5 20" stroke="#2a2a90" stroke-width="1.3"/>
  <circle cx="1200.2" cy="28.3" r="2.3" fill="#fff"/>
  <circle cx="1221.5" cy="28.3" r="2.3" fill="#fff"/>
  <g fill="none" stroke="#0c0c90" stroke-width="2.15" stroke-linejoin="round" stroke-linecap="butt">
    <path d="M1171 114V108.2A3.7 3.7 0 0 1 1174.7 104.5H1175.8A3.7 3.7 0 0 1 1179.5 108.2V114M1175.3 109V114"/>
    <path d="M1185.3 105.5H1187.7L1190.2 108.2V111L1187.7 113.4H1185.3L1182.9 111V108.2Z"/>
    <path d="M1192.8 105.5H1199.3A2.4 2.4 0 0 1 1201.7 107.9V107.9A2 2 0 0 1 1199.7 109.9H1193.3M1200 110V114.6"/>
    <path d="M1203.9 105.5H1213.3M1208.6 105.5V114.5"/>
    <path d="M1224.2 105.5H1218L1215.8 108V111L1218 113.5H1224.2M1219.3 109.5H1224.4"/>
    <path d="M1226.5 105.5H1235.5L1227.5 113.5H1236"/>
    <path d="M1246.2 115.2V105.5H1240.6L1238.5 108V111L1240.6 113.5H1246.2"/>
  </g>
</svg>

</body></html>
